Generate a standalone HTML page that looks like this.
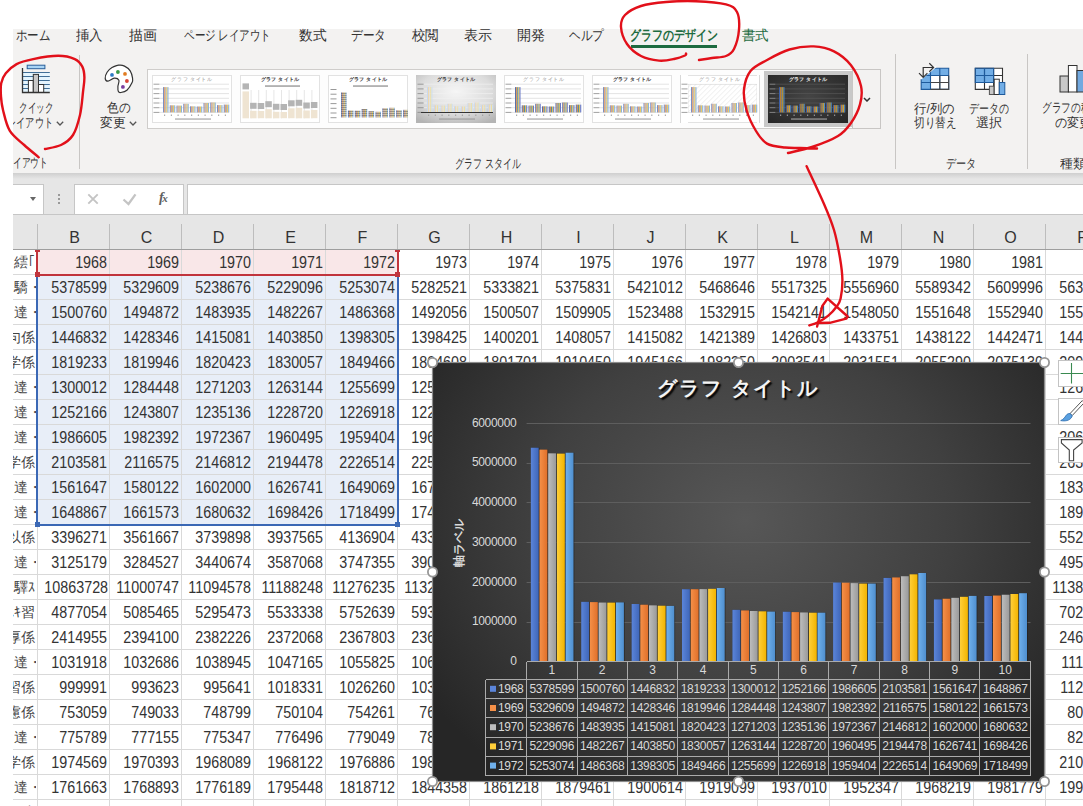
<!DOCTYPE html><html lang="ja"><head><meta charset="utf-8"><style>
*{box-sizing:border-box;margin:0;padding:0}
html,body{width:1083px;height:806px;overflow:hidden;background:#fff;font-family:"Liberation Sans", sans-serif;position:relative}
.a{position:absolute}
.tab{position:absolute;top:27px;font-size:13px;color:#444;white-space:nowrap;line-height:16px}
.rl{position:absolute;font-size:12px;color:#444;white-space:nowrap;line-height:15px;text-align:center}
.sep{position:absolute;width:1px;background:#c8c6c4}
.cell{position:absolute;height:25px;line-height:24px;font-size:16px;transform:scaleX(0.895);transform-origin:100% 50%;color:#333;text-align:right;white-space:nowrap;overflow:visible}
.hdr{position:absolute;top:221px;height:34px;line-height:34px;font-size:16px;color:#333;text-align:center}

</style></head><body>
<div class="a" style="left:13px;top:29px;width:1070px;height:144px;background:#f3f2f1"></div>
<span class="fit a" id="f1" style="left:16.02px;top:28.0px;font-size:14px;line-height:14px;color:#333;font-weight:500;white-space:nowrap;transform-origin:0 50%;transform:scaleX(0.8205);">ホーム</span>
<span class="fit a" id="f2" style="left:76.02px;top:28.0px;font-size:14px;line-height:14px;color:#333;font-weight:500;white-space:nowrap;transform-origin:0 50%;transform:scaleX(0.9629);">挿入</span>
<span class="fit a" id="f3" style="left:129.02px;top:28.0px;font-size:14px;line-height:14px;color:#333;font-weight:500;white-space:nowrap;transform-origin:0 50%;transform:scaleX(0.9986);">描画</span>
<span class="fit a" id="f4" style="left:184.02px;top:28.0px;font-size:14px;line-height:14px;color:#333;font-weight:500;white-space:nowrap;transform-origin:0 50%;transform:scaleX(0.7504);">ページ レイアウト</span>
<span class="fit a" id="f5" style="left:299.02px;top:28.0px;font-size:14px;line-height:14px;color:#333;font-weight:500;white-space:nowrap;transform-origin:0 50%;transform:scaleX(0.9807);">数式</span>
<span class="fit a" id="f6" style="left:351.02px;top:28.0px;font-size:14px;line-height:14px;color:#333;font-weight:500;white-space:nowrap;transform-origin:0 50%;transform:scaleX(0.8324);">データ</span>
<span class="fit a" id="f7" style="left:412.02px;top:28.0px;font-size:14px;line-height:14px;color:#333;font-weight:500;white-space:nowrap;transform-origin:0 50%;transform:scaleX(0.9629);">校閲</span>
<span class="fit a" id="f8" style="left:464.02px;top:28.0px;font-size:14px;line-height:14px;color:#333;font-weight:500;white-space:nowrap;transform-origin:0 50%;transform:scaleX(0.9986);">表示</span>
<span class="fit a" id="f9" style="left:517.02px;top:28.0px;font-size:14px;line-height:14px;color:#333;font-weight:500;white-space:nowrap;transform-origin:0 50%;transform:scaleX(0.9986);">開発</span>
<span class="fit a" id="f10" style="left:569.02px;top:28.0px;font-size:14px;line-height:14px;color:#333;font-weight:500;white-space:nowrap;transform-origin:0 50%;transform:scaleX(0.8324);">ヘルプ</span>
<span class="fit a" id="f11" style="left:630.02px;top:28.0px;font-size:14px;line-height:14px;color:#1d6b40;font-weight:bold;white-space:nowrap;transform-origin:0 50%;transform:scaleX(0.7809);">グラフのデザイン</span>
<div class="a" style="left:631px;top:45px;width:86px;height:3px;background:#1d6b40"></div>
<span class="fit a" id="f12" style="left:742.02px;top:28.0px;font-size:14px;line-height:14px;color:#1d6b40;font-weight:500;white-space:nowrap;transform-origin:0 50%;transform:scaleX(0.9629);">書式</span>
<svg class="a" style="left:21px;top:64px" width="30" height="30" viewBox="0 0 30 30">
<rect x="6.2" y="1.2" width="17.7" height="3.5" fill="#a8d4f5" stroke="#2a5f9a" stroke-width="1"/>
<rect x="1.5" y="8.5" width="27.3" height="20" fill="#e4f4fd"/>
<g stroke="#2c5f8a" stroke-width="0.9"><path d="M1.5 8.5 H28.8 M1.5 12.5 H28.8 M1.5 16.5 H28.8 M1.5 20.5 H28.8 M1.5 24.5 H28.8"/></g>
<rect x="7.4" y="16.5" width="4.9" height="12" fill="#fff" stroke="#333" stroke-width="1"/>
<rect x="12.3" y="10.4" width="5.2" height="18.1" fill="#c8c8c8" stroke="#333" stroke-width="1"/>
<rect x="17.5" y="20.5" width="5.2" height="8" fill="#fff" stroke="#333" stroke-width="1"/>
<path d="M1.5 4 V28.5 H28.8" fill="none" stroke="#333" stroke-width="1.3"/>
</svg>
<span class="fit a" id="f13" style="left:18.825px;top:102.3px;font-size:12.5px;line-height:12.5px;color:#333;font-weight:500;white-space:nowrap;transform-origin:0 50%;transform:scaleX(0.6625);">クイック</span>
<span class="fit a" id="f14" style="left:7.125px;top:117.2px;font-size:12.5px;line-height:12.5px;color:#333;font-weight:500;white-space:nowrap;transform-origin:0 50%;transform:scaleX(0.7100);">レイアウト</span>
<div class="a" style="left:0;top:110px;width:13px;height:30px;background:#fff"></div>
<svg class="a" style="left:56px;top:121px" width="8" height="5" viewBox="0 0 8 5"><path d="M0.8 0.8 L4 4 L7.2 0.8" fill="none" stroke="#555" stroke-width="1.3"/></svg>
<span class="fit a" id="f15" style="left:4.125px;top:157.4px;font-size:12.5px;line-height:12.5px;color:#333;font-weight:500;white-space:nowrap;transform-origin:0 50%;transform:scaleX(0.6762);">レイアウト</span>
<div class="a" style="left:0;top:150px;width:13px;height:30px;background:#fff"></div>
<div class="sep" style="left:79px;top:55px;height:114px"></div>
<svg class="a" style="left:104px;top:64px" width="30" height="30" viewBox="0 0 30 30">
<path d="M14.90 1.20 C15.72 0.42 9.97 2.42 8.00 3.60 C6.03 4.78 4.23 6.50 3.10 8.30 C1.97 10.10 1.05 12.92 1.20 14.40 C1.35 15.88 2.50 17.23 4.00 17.20 C5.50 17.17 8.38 14.35 10.20 14.20 C12.02 14.05 14.28 14.93 14.90 16.30 C15.52 17.67 13.98 20.52 13.90 22.40 C13.82 24.28 13.92 26.58 14.40 27.60 C14.88 28.62 15.38 28.73 16.80 28.50 C18.22 28.27 21.02 27.85 22.90 26.20 C24.78 24.55 27.17 20.65 28.10 18.60 C29.03 16.55 28.82 15.87 28.50 13.90 C28.18 11.93 27.53 8.77 26.20 6.80 C24.87 4.83 22.38 3.03 20.50 2.10 C18.62 1.17 16.98 0.95 14.90 1.20 Z" fill="#fff" stroke="#333" stroke-width="1.2"/>
<circle cx="8" cy="10.9" r="1.9" fill="#2e7bc4"/>
<circle cx="13.9" cy="8" r="1.9" fill="#3a9a4a"/>
<circle cx="21" cy="9.9" r="1.9" fill="#e07b21"/>
<circle cx="22.9" cy="17" r="1.9" fill="#d9463a"/>
<circle cx="18.9" cy="22.9" r="1.9" fill="#7a3fa0"/>
</svg>
<span class="fit a" id="f16" style="left:107.425px;top:102.3px;font-size:12.5px;line-height:12.5px;color:#333;font-weight:500;white-space:nowrap;transform-origin:0 50%;transform:scaleX(0.8981);">色の</span>
<span class="fit a" id="f17" style="left:100.025px;top:117.2px;font-size:12.5px;line-height:12.5px;color:#333;font-weight:500;white-space:nowrap;transform-origin:0 50%;transform:scaleX(0.9827);">変更</span>
<svg class="a" style="left:129px;top:121px" width="8" height="5" viewBox="0 0 8 5"><path d="M0.8 0.8 L4 4 L7.2 0.8" fill="none" stroke="#555" stroke-width="1.3"/></svg>
<div class="a" style="left:147px;top:69px;width:734px;height:60px;border:1px solid #cfcdcb;background:#fdfdfd"></div>
<div class="a" style="left:852px;top:69px;width:29px;height:60px;border:1px solid #c8c6c4;background:#f3f2f1"></div>
<svg class="a" style="left:863px;top:97px" width="8" height="5" viewBox="0 0 8 5"><path d="M1 1 L4 4 L7 1" fill="none" stroke="#333" stroke-width="1.5"/></svg>
<svg class="a" style="left:152px;top:75px" width="80" height="48" viewBox="0 0 80 48"><rect x="0.5" y="0.5" width="79" height="47" fill="#fff" stroke="#e2e2e2" stroke-width="1"/><text x="40" y="6" font-size="5" text-anchor="middle" fill="#8a8a8a" letter-spacing="0.6">グラフ タイトル</text><line x1="8" y1="9.2" x2="77" y2="9.2" stroke="#d9d9d9" stroke-width="0.7"/><rect x="1.5" y="8.7" width="6" height="1" fill="#8a8a8a" opacity="0.8"/><line x1="8" y1="13.9" x2="77" y2="13.9" stroke="#d9d9d9" stroke-width="0.7"/><rect x="1.5" y="13.4" width="6" height="1" fill="#8a8a8a" opacity="0.8"/><line x1="8" y1="18.6" x2="77" y2="18.6" stroke="#d9d9d9" stroke-width="0.7"/><rect x="1.5" y="18.1" width="6" height="1" fill="#8a8a8a" opacity="0.8"/><line x1="8" y1="23.3" x2="77" y2="23.3" stroke="#d9d9d9" stroke-width="0.7"/><rect x="1.5" y="22.8" width="6" height="1" fill="#8a8a8a" opacity="0.8"/><line x1="8" y1="28.0" x2="77" y2="28.0" stroke="#d9d9d9" stroke-width="0.7"/><rect x="1.5" y="27.5" width="6" height="1" fill="#8a8a8a" opacity="0.8"/><line x1="8" y1="32.7" x2="77" y2="32.7" stroke="#d9d9d9" stroke-width="0.7"/><rect x="1.5" y="32.2" width="6" height="1" fill="#8a8a8a" opacity="0.8"/><line x1="8" y1="37.4" x2="77" y2="37.4" stroke="#d9d9d9" stroke-width="0.7"/><rect x="1.5" y="36.9" width="6" height="1" fill="#8a8a8a" opacity="0.8"/><rect x="11.00" y="12.1" width="1.1" height="25.3" fill="#7b8fc4"/><rect x="12.10" y="12.1" width="1.1" height="25.3" fill="#e0a070"/><rect x="13.20" y="12.1" width="1.1" height="25.3" fill="#b0b0b0"/><rect x="14.30" y="12.1" width="1.1" height="25.3" fill="#e8c860"/><rect x="15.40" y="12.1" width="1.1" height="25.3" fill="#8cb4dc"/><rect x="17.75" y="30.3" width="1.1" height="7.0" fill="#7b8fc4"/><rect x="18.85" y="30.3" width="1.1" height="7.0" fill="#e0a070"/><rect x="19.95" y="30.3" width="1.1" height="7.0" fill="#b0b0b0"/><rect x="21.05" y="30.3" width="1.1" height="7.0" fill="#e8c860"/><rect x="22.15" y="30.3" width="1.1" height="7.0" fill="#8cb4dc"/><rect x="24.50" y="30.6" width="1.1" height="6.8" fill="#7b8fc4"/><rect x="25.60" y="30.6" width="1.1" height="6.8" fill="#e0a070"/><rect x="26.70" y="30.6" width="1.1" height="6.8" fill="#b0b0b0"/><rect x="27.80" y="30.6" width="1.1" height="6.8" fill="#e8c860"/><rect x="28.90" y="30.6" width="1.1" height="6.8" fill="#8cb4dc"/><rect x="31.25" y="28.8" width="1.1" height="8.6" fill="#7b8fc4"/><rect x="32.35" y="28.8" width="1.1" height="8.6" fill="#e0a070"/><rect x="33.45" y="28.8" width="1.1" height="8.6" fill="#b0b0b0"/><rect x="34.55" y="28.8" width="1.1" height="8.6" fill="#e8c860"/><rect x="35.65" y="28.8" width="1.1" height="8.6" fill="#8cb4dc"/><rect x="38.00" y="31.3" width="1.1" height="6.1" fill="#7b8fc4"/><rect x="39.10" y="31.3" width="1.1" height="6.1" fill="#e0a070"/><rect x="40.20" y="31.3" width="1.1" height="6.1" fill="#b0b0b0"/><rect x="41.30" y="31.3" width="1.1" height="6.1" fill="#e8c860"/><rect x="42.40" y="31.3" width="1.1" height="6.1" fill="#8cb4dc"/><rect x="44.75" y="31.5" width="1.1" height="5.9" fill="#7b8fc4"/><rect x="45.85" y="31.5" width="1.1" height="5.9" fill="#e0a070"/><rect x="46.95" y="31.5" width="1.1" height="5.9" fill="#b0b0b0"/><rect x="48.05" y="31.5" width="1.1" height="5.9" fill="#e8c860"/><rect x="49.15" y="31.5" width="1.1" height="5.9" fill="#8cb4dc"/><rect x="51.50" y="28.0" width="1.1" height="9.4" fill="#7b8fc4"/><rect x="52.60" y="28.0" width="1.1" height="9.4" fill="#e0a070"/><rect x="53.70" y="28.0" width="1.1" height="9.4" fill="#b0b0b0"/><rect x="54.80" y="28.0" width="1.1" height="9.4" fill="#e8c860"/><rect x="55.90" y="28.0" width="1.1" height="9.4" fill="#8cb4dc"/><rect x="58.25" y="27.5" width="1.1" height="9.9" fill="#7b8fc4"/><rect x="59.35" y="27.5" width="1.1" height="9.9" fill="#e0a070"/><rect x="60.45" y="27.5" width="1.1" height="9.9" fill="#b0b0b0"/><rect x="61.55" y="27.5" width="1.1" height="9.9" fill="#e8c860"/><rect x="62.65" y="27.5" width="1.1" height="9.9" fill="#8cb4dc"/><rect x="65.00" y="30.1" width="1.1" height="7.3" fill="#7b8fc4"/><rect x="66.10" y="30.1" width="1.1" height="7.3" fill="#e0a070"/><rect x="67.20" y="30.1" width="1.1" height="7.3" fill="#b0b0b0"/><rect x="68.30" y="30.1" width="1.1" height="7.3" fill="#e8c860"/><rect x="69.40" y="30.1" width="1.1" height="7.3" fill="#8cb4dc"/><rect x="71.75" y="29.6" width="1.1" height="7.8" fill="#7b8fc4"/><rect x="72.85" y="29.6" width="1.1" height="7.8" fill="#e0a070"/><rect x="73.95" y="29.6" width="1.1" height="7.8" fill="#b0b0b0"/><rect x="75.05" y="29.6" width="1.1" height="7.8" fill="#e8c860"/><rect x="76.15" y="29.6" width="1.1" height="7.8" fill="#8cb4dc"/><rect x="12.0" y="39.6" width="1.2" height="1.2" fill="#999"/><rect x="18.8" y="39.6" width="1.2" height="1.2" fill="#999"/><rect x="25.5" y="39.6" width="1.2" height="1.2" fill="#999"/><rect x="32.2" y="39.6" width="1.2" height="1.2" fill="#999"/><rect x="39.0" y="39.6" width="1.2" height="1.2" fill="#999"/><rect x="45.8" y="39.6" width="1.2" height="1.2" fill="#999"/><rect x="52.5" y="39.6" width="1.2" height="1.2" fill="#999"/><rect x="59.2" y="39.6" width="1.2" height="1.2" fill="#999"/><rect x="66.0" y="39.6" width="1.2" height="1.2" fill="#999"/><rect x="72.8" y="39.6" width="1.2" height="1.2" fill="#999"/><rect x="23" y="43.4" width="36" height="1.3" fill="#999" opacity="0.8"/></svg>
<svg class="a" style="left:240px;top:75px" width="80" height="48" viewBox="0 0 80 48"><rect x="0.5" y="0.5" width="79" height="47" fill="#fff" stroke="#e2e2e2" stroke-width="1"/><text x="40" y="6.3" font-size="5.2" font-weight="bold" text-anchor="middle" fill="#333" letter-spacing="0.3">グラフ タイトル</text><rect x="25" y="10.3" width="35" height="1.5" fill="#777" opacity="0.7"/><line x1="11.1" y1="15" x2="11.1" y2="43.3" stroke="#ccc" stroke-width="0.5"/><rect x="2.5" y="16.4" width="6.5" height="26.9" fill="#efe4d2"/><rect x="2.5" y="8.4" width="6.5" height="6" fill="#b4b4b4"/><line x1="18.7" y1="15" x2="18.7" y2="43.3" stroke="#ccc" stroke-width="0.5"/><rect x="10.1" y="35.8" width="6.5" height="7.5" fill="#efe4d2"/><rect x="10.1" y="27.8" width="6.5" height="6" fill="#b4b4b4"/><line x1="26.3" y1="15" x2="26.3" y2="43.3" stroke="#ccc" stroke-width="0.5"/><rect x="17.7" y="36.0" width="6.5" height="7.2" fill="#efe4d2"/><rect x="17.7" y="28.0" width="6.5" height="6" fill="#b4b4b4"/><line x1="33.9" y1="15" x2="33.9" y2="43.3" stroke="#ccc" stroke-width="0.5"/><rect x="25.3" y="34.2" width="6.5" height="9.1" fill="#efe4d2"/><rect x="25.3" y="26.2" width="6.5" height="6" fill="#b4b4b4"/><line x1="41.5" y1="15" x2="41.5" y2="43.3" stroke="#ccc" stroke-width="0.5"/><rect x="32.9" y="36.8" width="6.5" height="6.5" fill="#efe4d2"/><rect x="32.9" y="28.8" width="6.5" height="6" fill="#b4b4b4"/><line x1="49.1" y1="15" x2="49.1" y2="43.3" stroke="#ccc" stroke-width="0.5"/><rect x="40.5" y="37.0" width="6.5" height="6.2" fill="#efe4d2"/><rect x="40.5" y="29.0" width="6.5" height="6" fill="#b4b4b4"/><line x1="56.7" y1="15" x2="56.7" y2="43.3" stroke="#ccc" stroke-width="0.5"/><rect x="48.1" y="33.3" width="6.5" height="9.9" fill="#efe4d2"/><rect x="48.1" y="25.3" width="6.5" height="6" fill="#b4b4b4"/><line x1="64.3" y1="15" x2="64.3" y2="43.3" stroke="#ccc" stroke-width="0.5"/><rect x="55.7" y="32.8" width="6.5" height="10.5" fill="#efe4d2"/><rect x="55.7" y="24.8" width="6.5" height="6" fill="#b4b4b4"/><line x1="71.9" y1="15" x2="71.9" y2="43.3" stroke="#ccc" stroke-width="0.5"/><rect x="63.3" y="35.5" width="6.5" height="7.8" fill="#efe4d2"/><rect x="63.3" y="27.5" width="6.5" height="6" fill="#b4b4b4"/><rect x="70.9" y="35.0" width="6.5" height="8.2" fill="#efe4d2"/><rect x="70.9" y="27.0" width="6.5" height="6" fill="#b4b4b4"/></svg>
<svg class="a" style="left:328px;top:75px" width="80" height="48" viewBox="0 0 80 48"><rect x="0.5" y="0.5" width="79" height="47" fill="#fff" stroke="#e2e2e2" stroke-width="1"/><text x="40" y="6.3" font-size="5.2" font-weight="bold" text-anchor="middle" fill="#333" letter-spacing="0.3">グラフ タイトル</text><rect x="25" y="10.3" width="35" height="1.5" fill="#777" opacity="0.7"/><rect x="2.5" y="14.0" width="6" height="1" fill="#999"/><rect x="2.5" y="18.7" width="6" height="1" fill="#999"/><rect x="2.5" y="23.4" width="6" height="1" fill="#999"/><rect x="2.5" y="28.1" width="6" height="1" fill="#999"/><rect x="2.5" y="32.8" width="6" height="1" fill="#999"/><rect x="2.5" y="37.5" width="6" height="1" fill="#999"/><rect x="2.5" y="42.2" width="6" height="1" fill="#999"/><rect x="13.00" y="17.4" width="1.1" height="25.1" fill="#7b8fc4"/><rect x="14.10" y="17.4" width="1.1" height="25.1" fill="#e0a070"/><rect x="15.20" y="17.4" width="1.1" height="25.1" fill="#b0b0b0"/><rect x="16.30" y="17.4" width="1.1" height="25.1" fill="#e8c860"/><rect x="17.40" y="17.4" width="1.1" height="25.1" fill="#8cb4dc"/><line x1="13.0" y1="40.5" x2="18.5" y2="40.5" stroke="#555" stroke-width="0.45"/><line x1="13.0" y1="38.5" x2="18.5" y2="38.5" stroke="#555" stroke-width="0.45"/><line x1="13.0" y1="36.5" x2="18.5" y2="36.5" stroke="#555" stroke-width="0.45"/><line x1="13.0" y1="34.5" x2="18.5" y2="34.5" stroke="#555" stroke-width="0.45"/><line x1="13.0" y1="32.5" x2="18.5" y2="32.5" stroke="#555" stroke-width="0.45"/><line x1="13.0" y1="30.5" x2="18.5" y2="30.5" stroke="#555" stroke-width="0.45"/><line x1="13.0" y1="28.5" x2="18.5" y2="28.5" stroke="#555" stroke-width="0.45"/><line x1="13.0" y1="26.5" x2="18.5" y2="26.5" stroke="#555" stroke-width="0.45"/><line x1="13.0" y1="24.5" x2="18.5" y2="24.5" stroke="#555" stroke-width="0.45"/><line x1="13.0" y1="22.5" x2="18.5" y2="22.5" stroke="#555" stroke-width="0.45"/><line x1="13.0" y1="20.5" x2="18.5" y2="20.5" stroke="#555" stroke-width="0.45"/><line x1="13.0" y1="18.5" x2="18.5" y2="18.5" stroke="#555" stroke-width="0.45"/><rect x="19.90" y="35.5" width="1.1" height="7.0" fill="#7b8fc4"/><rect x="21.00" y="35.5" width="1.1" height="7.0" fill="#e0a070"/><rect x="22.10" y="35.5" width="1.1" height="7.0" fill="#b0b0b0"/><rect x="23.20" y="35.5" width="1.1" height="7.0" fill="#e8c860"/><rect x="24.30" y="35.5" width="1.1" height="7.0" fill="#8cb4dc"/><line x1="19.9" y1="40.5" x2="25.4" y2="40.5" stroke="#555" stroke-width="0.45"/><line x1="19.9" y1="38.5" x2="25.4" y2="38.5" stroke="#555" stroke-width="0.45"/><line x1="19.9" y1="36.5" x2="25.4" y2="36.5" stroke="#555" stroke-width="0.45"/><rect x="26.80" y="35.7" width="1.1" height="6.8" fill="#7b8fc4"/><rect x="27.90" y="35.7" width="1.1" height="6.8" fill="#e0a070"/><rect x="29.00" y="35.7" width="1.1" height="6.8" fill="#b0b0b0"/><rect x="30.10" y="35.7" width="1.1" height="6.8" fill="#e8c860"/><rect x="31.20" y="35.7" width="1.1" height="6.8" fill="#8cb4dc"/><line x1="26.8" y1="40.5" x2="32.3" y2="40.5" stroke="#555" stroke-width="0.45"/><line x1="26.8" y1="38.5" x2="32.3" y2="38.5" stroke="#555" stroke-width="0.45"/><line x1="26.8" y1="36.5" x2="32.3" y2="36.5" stroke="#555" stroke-width="0.45"/><rect x="33.70" y="34.0" width="1.1" height="8.5" fill="#7b8fc4"/><rect x="34.80" y="34.0" width="1.1" height="8.5" fill="#e0a070"/><rect x="35.90" y="34.0" width="1.1" height="8.5" fill="#b0b0b0"/><rect x="37.00" y="34.0" width="1.1" height="8.5" fill="#e8c860"/><rect x="38.10" y="34.0" width="1.1" height="8.5" fill="#8cb4dc"/><line x1="33.7" y1="40.5" x2="39.2" y2="40.5" stroke="#555" stroke-width="0.45"/><line x1="33.7" y1="38.5" x2="39.2" y2="38.5" stroke="#555" stroke-width="0.45"/><line x1="33.7" y1="36.5" x2="39.2" y2="36.5" stroke="#555" stroke-width="0.45"/><line x1="33.7" y1="34.5" x2="39.2" y2="34.5" stroke="#555" stroke-width="0.45"/><rect x="40.60" y="36.4" width="1.1" height="6.1" fill="#7b8fc4"/><rect x="41.70" y="36.4" width="1.1" height="6.1" fill="#e0a070"/><rect x="42.80" y="36.4" width="1.1" height="6.1" fill="#b0b0b0"/><rect x="43.90" y="36.4" width="1.1" height="6.1" fill="#e8c860"/><rect x="45.00" y="36.4" width="1.1" height="6.1" fill="#8cb4dc"/><line x1="40.6" y1="40.5" x2="46.1" y2="40.5" stroke="#555" stroke-width="0.45"/><line x1="40.6" y1="38.5" x2="46.1" y2="38.5" stroke="#555" stroke-width="0.45"/><line x1="40.6" y1="36.5" x2="46.1" y2="36.5" stroke="#555" stroke-width="0.45"/><rect x="47.50" y="36.7" width="1.1" height="5.8" fill="#7b8fc4"/><rect x="48.60" y="36.7" width="1.1" height="5.8" fill="#e0a070"/><rect x="49.70" y="36.7" width="1.1" height="5.8" fill="#b0b0b0"/><rect x="50.80" y="36.7" width="1.1" height="5.8" fill="#e8c860"/><rect x="51.90" y="36.7" width="1.1" height="5.8" fill="#8cb4dc"/><line x1="47.5" y1="40.5" x2="53.0" y2="40.5" stroke="#555" stroke-width="0.45"/><line x1="47.5" y1="38.5" x2="53.0" y2="38.5" stroke="#555" stroke-width="0.45"/><rect x="54.40" y="33.2" width="1.1" height="9.3" fill="#7b8fc4"/><rect x="55.50" y="33.2" width="1.1" height="9.3" fill="#e0a070"/><rect x="56.60" y="33.2" width="1.1" height="9.3" fill="#b0b0b0"/><rect x="57.70" y="33.2" width="1.1" height="9.3" fill="#e8c860"/><rect x="58.80" y="33.2" width="1.1" height="9.3" fill="#8cb4dc"/><line x1="54.4" y1="40.5" x2="59.9" y2="40.5" stroke="#555" stroke-width="0.45"/><line x1="54.4" y1="38.5" x2="59.9" y2="38.5" stroke="#555" stroke-width="0.45"/><line x1="54.4" y1="36.5" x2="59.9" y2="36.5" stroke="#555" stroke-width="0.45"/><line x1="54.4" y1="34.5" x2="59.9" y2="34.5" stroke="#555" stroke-width="0.45"/><rect x="61.30" y="32.7" width="1.1" height="9.8" fill="#7b8fc4"/><rect x="62.40" y="32.7" width="1.1" height="9.8" fill="#e0a070"/><rect x="63.50" y="32.7" width="1.1" height="9.8" fill="#b0b0b0"/><rect x="64.60" y="32.7" width="1.1" height="9.8" fill="#e8c860"/><rect x="65.70" y="32.7" width="1.1" height="9.8" fill="#8cb4dc"/><line x1="61.3" y1="40.5" x2="66.8" y2="40.5" stroke="#555" stroke-width="0.45"/><line x1="61.3" y1="38.5" x2="66.8" y2="38.5" stroke="#555" stroke-width="0.45"/><line x1="61.3" y1="36.5" x2="66.8" y2="36.5" stroke="#555" stroke-width="0.45"/><line x1="61.3" y1="34.5" x2="66.8" y2="34.5" stroke="#555" stroke-width="0.45"/><rect x="68.20" y="35.2" width="1.1" height="7.3" fill="#7b8fc4"/><rect x="69.30" y="35.2" width="1.1" height="7.3" fill="#e0a070"/><rect x="70.40" y="35.2" width="1.1" height="7.3" fill="#b0b0b0"/><rect x="71.50" y="35.2" width="1.1" height="7.3" fill="#e8c860"/><rect x="72.60" y="35.2" width="1.1" height="7.3" fill="#8cb4dc"/><line x1="68.2" y1="40.5" x2="73.7" y2="40.5" stroke="#555" stroke-width="0.45"/><line x1="68.2" y1="38.5" x2="73.7" y2="38.5" stroke="#555" stroke-width="0.45"/><line x1="68.2" y1="36.5" x2="73.7" y2="36.5" stroke="#555" stroke-width="0.45"/><rect x="75.10" y="34.8" width="1.1" height="7.7" fill="#7b8fc4"/><rect x="76.20" y="34.8" width="1.1" height="7.7" fill="#e0a070"/><rect x="77.30" y="34.8" width="1.1" height="7.7" fill="#b0b0b0"/><rect x="78.40" y="34.8" width="1.1" height="7.7" fill="#e8c860"/><rect x="79.50" y="34.8" width="1.1" height="7.7" fill="#8cb4dc"/><line x1="75.1" y1="40.5" x2="80.6" y2="40.5" stroke="#555" stroke-width="0.45"/><line x1="75.1" y1="38.5" x2="80.6" y2="38.5" stroke="#555" stroke-width="0.45"/><line x1="75.1" y1="36.5" x2="80.6" y2="36.5" stroke="#555" stroke-width="0.45"/></svg>
<svg class="a" style="left:416px;top:75px" width="80" height="48" viewBox="0 0 80 48"><defs><radialGradient id="tg3" cx="50%" cy="35%" r="75%"><stop offset="0" stop-color="#f6f6f6"/><stop offset="0.6" stop-color="#dcdcdc"/><stop offset="1" stop-color="#b4b4b4"/></radialGradient></defs><rect x="0" y="0" width="80" height="48" fill="url(#tg3)"/><text x="40" y="6.3" font-size="5.2" font-weight="bold" text-anchor="middle" fill="#333" letter-spacing="0.3">グラフ タイトル</text><line x1="8" y1="9.2" x2="77" y2="9.2" stroke="#f0f0f0" stroke-width="0.7"/><rect x="1.5" y="8.7" width="6" height="1" fill="#8a8a8a" opacity="0.8"/><line x1="8" y1="13.9" x2="77" y2="13.9" stroke="#f0f0f0" stroke-width="0.7"/><rect x="1.5" y="13.4" width="6" height="1" fill="#8a8a8a" opacity="0.8"/><line x1="8" y1="18.6" x2="77" y2="18.6" stroke="#f0f0f0" stroke-width="0.7"/><rect x="1.5" y="18.1" width="6" height="1" fill="#8a8a8a" opacity="0.8"/><line x1="8" y1="23.3" x2="77" y2="23.3" stroke="#f0f0f0" stroke-width="0.7"/><rect x="1.5" y="22.8" width="6" height="1" fill="#8a8a8a" opacity="0.8"/><line x1="8" y1="28.0" x2="77" y2="28.0" stroke="#f0f0f0" stroke-width="0.7"/><rect x="1.5" y="27.5" width="6" height="1" fill="#8a8a8a" opacity="0.8"/><line x1="8" y1="32.7" x2="77" y2="32.7" stroke="#f0f0f0" stroke-width="0.7"/><rect x="1.5" y="32.2" width="6" height="1" fill="#8a8a8a" opacity="0.8"/><line x1="8" y1="37.4" x2="77" y2="37.4" stroke="#f0f0f0" stroke-width="0.7"/><rect x="1.5" y="36.9" width="6" height="1" fill="#8a8a8a" opacity="0.8"/><rect x="11.00" y="12.1" width="1.1" height="25.3" fill="#c8d8f0"/><rect x="12.10" y="12.1" width="1.1" height="25.3" fill="#f0d8a8"/><rect x="13.20" y="12.1" width="1.1" height="25.3" fill="#e0e0e0"/><rect x="14.30" y="12.1" width="1.1" height="25.3" fill="#f0e0a0"/><rect x="15.40" y="12.1" width="1.1" height="25.3" fill="#d0e0f0"/><rect x="17.75" y="30.3" width="1.1" height="7.0" fill="#c8d8f0"/><rect x="18.85" y="30.3" width="1.1" height="7.0" fill="#f0d8a8"/><rect x="19.95" y="30.3" width="1.1" height="7.0" fill="#e0e0e0"/><rect x="21.05" y="30.3" width="1.1" height="7.0" fill="#f0e0a0"/><rect x="22.15" y="30.3" width="1.1" height="7.0" fill="#d0e0f0"/><rect x="24.50" y="30.6" width="1.1" height="6.8" fill="#c8d8f0"/><rect x="25.60" y="30.6" width="1.1" height="6.8" fill="#f0d8a8"/><rect x="26.70" y="30.6" width="1.1" height="6.8" fill="#e0e0e0"/><rect x="27.80" y="30.6" width="1.1" height="6.8" fill="#f0e0a0"/><rect x="28.90" y="30.6" width="1.1" height="6.8" fill="#d0e0f0"/><rect x="31.25" y="28.8" width="1.1" height="8.6" fill="#c8d8f0"/><rect x="32.35" y="28.8" width="1.1" height="8.6" fill="#f0d8a8"/><rect x="33.45" y="28.8" width="1.1" height="8.6" fill="#e0e0e0"/><rect x="34.55" y="28.8" width="1.1" height="8.6" fill="#f0e0a0"/><rect x="35.65" y="28.8" width="1.1" height="8.6" fill="#d0e0f0"/><rect x="38.00" y="31.3" width="1.1" height="6.1" fill="#c8d8f0"/><rect x="39.10" y="31.3" width="1.1" height="6.1" fill="#f0d8a8"/><rect x="40.20" y="31.3" width="1.1" height="6.1" fill="#e0e0e0"/><rect x="41.30" y="31.3" width="1.1" height="6.1" fill="#f0e0a0"/><rect x="42.40" y="31.3" width="1.1" height="6.1" fill="#d0e0f0"/><rect x="44.75" y="31.5" width="1.1" height="5.9" fill="#c8d8f0"/><rect x="45.85" y="31.5" width="1.1" height="5.9" fill="#f0d8a8"/><rect x="46.95" y="31.5" width="1.1" height="5.9" fill="#e0e0e0"/><rect x="48.05" y="31.5" width="1.1" height="5.9" fill="#f0e0a0"/><rect x="49.15" y="31.5" width="1.1" height="5.9" fill="#d0e0f0"/><rect x="51.50" y="28.0" width="1.1" height="9.4" fill="#c8d8f0"/><rect x="52.60" y="28.0" width="1.1" height="9.4" fill="#f0d8a8"/><rect x="53.70" y="28.0" width="1.1" height="9.4" fill="#e0e0e0"/><rect x="54.80" y="28.0" width="1.1" height="9.4" fill="#f0e0a0"/><rect x="55.90" y="28.0" width="1.1" height="9.4" fill="#d0e0f0"/><rect x="58.25" y="27.5" width="1.1" height="9.9" fill="#c8d8f0"/><rect x="59.35" y="27.5" width="1.1" height="9.9" fill="#f0d8a8"/><rect x="60.45" y="27.5" width="1.1" height="9.9" fill="#e0e0e0"/><rect x="61.55" y="27.5" width="1.1" height="9.9" fill="#f0e0a0"/><rect x="62.65" y="27.5" width="1.1" height="9.9" fill="#d0e0f0"/><rect x="65.00" y="30.1" width="1.1" height="7.3" fill="#c8d8f0"/><rect x="66.10" y="30.1" width="1.1" height="7.3" fill="#f0d8a8"/><rect x="67.20" y="30.1" width="1.1" height="7.3" fill="#e0e0e0"/><rect x="68.30" y="30.1" width="1.1" height="7.3" fill="#f0e0a0"/><rect x="69.40" y="30.1" width="1.1" height="7.3" fill="#d0e0f0"/><rect x="71.75" y="29.6" width="1.1" height="7.8" fill="#c8d8f0"/><rect x="72.85" y="29.6" width="1.1" height="7.8" fill="#f0d8a8"/><rect x="73.95" y="29.6" width="1.1" height="7.8" fill="#e0e0e0"/><rect x="75.05" y="29.6" width="1.1" height="7.8" fill="#f0e0a0"/><rect x="76.15" y="29.6" width="1.1" height="7.8" fill="#d0e0f0"/><rect x="5" y="37" width="72" height="1" fill="#333"/><rect x="12.0" y="39.6" width="1.2" height="1.2" fill="#999"/><rect x="18.8" y="39.6" width="1.2" height="1.2" fill="#999"/><rect x="25.5" y="39.6" width="1.2" height="1.2" fill="#999"/><rect x="32.2" y="39.6" width="1.2" height="1.2" fill="#999"/><rect x="39.0" y="39.6" width="1.2" height="1.2" fill="#999"/><rect x="45.8" y="39.6" width="1.2" height="1.2" fill="#999"/><rect x="52.5" y="39.6" width="1.2" height="1.2" fill="#999"/><rect x="59.2" y="39.6" width="1.2" height="1.2" fill="#999"/><rect x="66.0" y="39.6" width="1.2" height="1.2" fill="#999"/><rect x="72.8" y="39.6" width="1.2" height="1.2" fill="#999"/><rect x="23" y="43.4" width="36" height="1.3" fill="#999" opacity="0.8"/></svg>
<svg class="a" style="left:504px;top:75px" width="80" height="48" viewBox="0 0 80 48"><rect x="0.5" y="0.5" width="79" height="47" fill="#fff" stroke="#e2e2e2" stroke-width="1"/><text x="40" y="6" font-size="5" text-anchor="middle" fill="#8a8a8a" letter-spacing="0.6">グラフ タイトル</text><line x1="8" y1="9.2" x2="77" y2="9.2" stroke="#d9d9d9" stroke-width="0.7"/><rect x="1.5" y="8.7" width="6" height="1" fill="#8a8a8a" opacity="0.8"/><line x1="8" y1="13.9" x2="77" y2="13.9" stroke="#d9d9d9" stroke-width="0.7"/><rect x="1.5" y="13.4" width="6" height="1" fill="#8a8a8a" opacity="0.8"/><line x1="8" y1="18.6" x2="77" y2="18.6" stroke="#d9d9d9" stroke-width="0.7"/><rect x="1.5" y="18.1" width="6" height="1" fill="#8a8a8a" opacity="0.8"/><line x1="8" y1="23.3" x2="77" y2="23.3" stroke="#d9d9d9" stroke-width="0.7"/><rect x="1.5" y="22.8" width="6" height="1" fill="#8a8a8a" opacity="0.8"/><line x1="8" y1="28.0" x2="77" y2="28.0" stroke="#d9d9d9" stroke-width="0.7"/><rect x="1.5" y="27.5" width="6" height="1" fill="#8a8a8a" opacity="0.8"/><line x1="8" y1="32.7" x2="77" y2="32.7" stroke="#d9d9d9" stroke-width="0.7"/><rect x="1.5" y="32.2" width="6" height="1" fill="#8a8a8a" opacity="0.8"/><line x1="8" y1="37.4" x2="77" y2="37.4" stroke="#d9d9d9" stroke-width="0.7"/><rect x="1.5" y="36.9" width="6" height="1" fill="#8a8a8a" opacity="0.8"/><rect x="11.00" y="12.1" width="1.1" height="25.3" fill="#5a6fa8"/><rect x="12.10" y="12.1" width="1.1" height="25.3" fill="#d89050"/><rect x="13.20" y="12.1" width="1.1" height="25.3" fill="#5a8aa0"/><rect x="14.30" y="12.1" width="1.1" height="25.3" fill="#d8c050"/><rect x="15.40" y="12.1" width="1.1" height="25.3" fill="#6878c8"/><rect x="17.75" y="30.3" width="1.1" height="7.0" fill="#5a6fa8"/><rect x="18.85" y="30.3" width="1.1" height="7.0" fill="#d89050"/><rect x="19.95" y="30.3" width="1.1" height="7.0" fill="#5a8aa0"/><rect x="21.05" y="30.3" width="1.1" height="7.0" fill="#d8c050"/><rect x="22.15" y="30.3" width="1.1" height="7.0" fill="#6878c8"/><rect x="24.50" y="30.6" width="1.1" height="6.8" fill="#5a6fa8"/><rect x="25.60" y="30.6" width="1.1" height="6.8" fill="#d89050"/><rect x="26.70" y="30.6" width="1.1" height="6.8" fill="#5a8aa0"/><rect x="27.80" y="30.6" width="1.1" height="6.8" fill="#d8c050"/><rect x="28.90" y="30.6" width="1.1" height="6.8" fill="#6878c8"/><rect x="31.25" y="28.8" width="1.1" height="8.6" fill="#5a6fa8"/><rect x="32.35" y="28.8" width="1.1" height="8.6" fill="#d89050"/><rect x="33.45" y="28.8" width="1.1" height="8.6" fill="#5a8aa0"/><rect x="34.55" y="28.8" width="1.1" height="8.6" fill="#d8c050"/><rect x="35.65" y="28.8" width="1.1" height="8.6" fill="#6878c8"/><rect x="38.00" y="31.3" width="1.1" height="6.1" fill="#5a6fa8"/><rect x="39.10" y="31.3" width="1.1" height="6.1" fill="#d89050"/><rect x="40.20" y="31.3" width="1.1" height="6.1" fill="#5a8aa0"/><rect x="41.30" y="31.3" width="1.1" height="6.1" fill="#d8c050"/><rect x="42.40" y="31.3" width="1.1" height="6.1" fill="#6878c8"/><rect x="44.75" y="31.5" width="1.1" height="5.9" fill="#5a6fa8"/><rect x="45.85" y="31.5" width="1.1" height="5.9" fill="#d89050"/><rect x="46.95" y="31.5" width="1.1" height="5.9" fill="#5a8aa0"/><rect x="48.05" y="31.5" width="1.1" height="5.9" fill="#d8c050"/><rect x="49.15" y="31.5" width="1.1" height="5.9" fill="#6878c8"/><rect x="51.50" y="28.0" width="1.1" height="9.4" fill="#5a6fa8"/><rect x="52.60" y="28.0" width="1.1" height="9.4" fill="#d89050"/><rect x="53.70" y="28.0" width="1.1" height="9.4" fill="#5a8aa0"/><rect x="54.80" y="28.0" width="1.1" height="9.4" fill="#d8c050"/><rect x="55.90" y="28.0" width="1.1" height="9.4" fill="#6878c8"/><rect x="58.25" y="27.5" width="1.1" height="9.9" fill="#5a6fa8"/><rect x="59.35" y="27.5" width="1.1" height="9.9" fill="#d89050"/><rect x="60.45" y="27.5" width="1.1" height="9.9" fill="#5a8aa0"/><rect x="61.55" y="27.5" width="1.1" height="9.9" fill="#d8c050"/><rect x="62.65" y="27.5" width="1.1" height="9.9" fill="#6878c8"/><rect x="65.00" y="30.1" width="1.1" height="7.3" fill="#5a6fa8"/><rect x="66.10" y="30.1" width="1.1" height="7.3" fill="#d89050"/><rect x="67.20" y="30.1" width="1.1" height="7.3" fill="#5a8aa0"/><rect x="68.30" y="30.1" width="1.1" height="7.3" fill="#d8c050"/><rect x="69.40" y="30.1" width="1.1" height="7.3" fill="#6878c8"/><rect x="71.75" y="29.6" width="1.1" height="7.8" fill="#5a6fa8"/><rect x="72.85" y="29.6" width="1.1" height="7.8" fill="#d89050"/><rect x="73.95" y="29.6" width="1.1" height="7.8" fill="#5a8aa0"/><rect x="75.05" y="29.6" width="1.1" height="7.8" fill="#d8c050"/><rect x="76.15" y="29.6" width="1.1" height="7.8" fill="#6878c8"/><rect x="12.0" y="39.6" width="1.2" height="1.2" fill="#999"/><rect x="18.8" y="39.6" width="1.2" height="1.2" fill="#999"/><rect x="25.5" y="39.6" width="1.2" height="1.2" fill="#999"/><rect x="32.2" y="39.6" width="1.2" height="1.2" fill="#999"/><rect x="39.0" y="39.6" width="1.2" height="1.2" fill="#999"/><rect x="45.8" y="39.6" width="1.2" height="1.2" fill="#999"/><rect x="52.5" y="39.6" width="1.2" height="1.2" fill="#999"/><rect x="59.2" y="39.6" width="1.2" height="1.2" fill="#999"/><rect x="66.0" y="39.6" width="1.2" height="1.2" fill="#999"/><rect x="72.8" y="39.6" width="1.2" height="1.2" fill="#999"/><rect x="23" y="43.4" width="36" height="1.3" fill="#999" opacity="0.8"/></svg>
<svg class="a" style="left:592px;top:75px" width="80" height="48" viewBox="0 0 80 48"><rect x="0.5" y="0.5" width="79" height="47" fill="#fff" stroke="#e2e2e2" stroke-width="1"/><text x="40" y="6.3" font-size="5.2" font-weight="bold" text-anchor="middle" fill="#333" letter-spacing="0.3">グラフ タイトル</text><line x1="8" y1="9.2" x2="77" y2="9.2" stroke="#d9d9d9" stroke-width="0.7"/><rect x="1.5" y="8.7" width="6" height="1" fill="#8a8a8a" opacity="0.8"/><line x1="8" y1="13.9" x2="77" y2="13.9" stroke="#d9d9d9" stroke-width="0.7"/><rect x="1.5" y="13.4" width="6" height="1" fill="#8a8a8a" opacity="0.8"/><line x1="8" y1="18.6" x2="77" y2="18.6" stroke="#d9d9d9" stroke-width="0.7"/><rect x="1.5" y="18.1" width="6" height="1" fill="#8a8a8a" opacity="0.8"/><line x1="8" y1="23.3" x2="77" y2="23.3" stroke="#d9d9d9" stroke-width="0.7"/><rect x="1.5" y="22.8" width="6" height="1" fill="#8a8a8a" opacity="0.8"/><line x1="8" y1="28.0" x2="77" y2="28.0" stroke="#d9d9d9" stroke-width="0.7"/><rect x="1.5" y="27.5" width="6" height="1" fill="#8a8a8a" opacity="0.8"/><line x1="8" y1="32.7" x2="77" y2="32.7" stroke="#d9d9d9" stroke-width="0.7"/><rect x="1.5" y="32.2" width="6" height="1" fill="#8a8a8a" opacity="0.8"/><line x1="8" y1="37.4" x2="77" y2="37.4" stroke="#d9d9d9" stroke-width="0.7"/><rect x="1.5" y="36.9" width="6" height="1" fill="#8a8a8a" opacity="0.8"/><rect x="11.00" y="12.1" width="1.1" height="25.3" fill="#7b8fc4"/><rect x="12.10" y="12.1" width="1.1" height="25.3" fill="#e0a070"/><rect x="13.20" y="12.1" width="1.1" height="25.3" fill="#b0b0b0"/><rect x="14.30" y="12.1" width="1.1" height="25.3" fill="#e8c860"/><rect x="15.40" y="12.1" width="1.1" height="25.3" fill="#8cb4dc"/><rect x="17.75" y="30.3" width="1.1" height="7.0" fill="#7b8fc4"/><rect x="18.85" y="30.3" width="1.1" height="7.0" fill="#e0a070"/><rect x="19.95" y="30.3" width="1.1" height="7.0" fill="#b0b0b0"/><rect x="21.05" y="30.3" width="1.1" height="7.0" fill="#e8c860"/><rect x="22.15" y="30.3" width="1.1" height="7.0" fill="#8cb4dc"/><rect x="24.50" y="30.6" width="1.1" height="6.8" fill="#7b8fc4"/><rect x="25.60" y="30.6" width="1.1" height="6.8" fill="#e0a070"/><rect x="26.70" y="30.6" width="1.1" height="6.8" fill="#b0b0b0"/><rect x="27.80" y="30.6" width="1.1" height="6.8" fill="#e8c860"/><rect x="28.90" y="30.6" width="1.1" height="6.8" fill="#8cb4dc"/><rect x="31.25" y="28.8" width="1.1" height="8.6" fill="#7b8fc4"/><rect x="32.35" y="28.8" width="1.1" height="8.6" fill="#e0a070"/><rect x="33.45" y="28.8" width="1.1" height="8.6" fill="#b0b0b0"/><rect x="34.55" y="28.8" width="1.1" height="8.6" fill="#e8c860"/><rect x="35.65" y="28.8" width="1.1" height="8.6" fill="#8cb4dc"/><rect x="38.00" y="31.3" width="1.1" height="6.1" fill="#7b8fc4"/><rect x="39.10" y="31.3" width="1.1" height="6.1" fill="#e0a070"/><rect x="40.20" y="31.3" width="1.1" height="6.1" fill="#b0b0b0"/><rect x="41.30" y="31.3" width="1.1" height="6.1" fill="#e8c860"/><rect x="42.40" y="31.3" width="1.1" height="6.1" fill="#8cb4dc"/><rect x="44.75" y="31.5" width="1.1" height="5.9" fill="#7b8fc4"/><rect x="45.85" y="31.5" width="1.1" height="5.9" fill="#e0a070"/><rect x="46.95" y="31.5" width="1.1" height="5.9" fill="#b0b0b0"/><rect x="48.05" y="31.5" width="1.1" height="5.9" fill="#e8c860"/><rect x="49.15" y="31.5" width="1.1" height="5.9" fill="#8cb4dc"/><rect x="51.50" y="28.0" width="1.1" height="9.4" fill="#7b8fc4"/><rect x="52.60" y="28.0" width="1.1" height="9.4" fill="#e0a070"/><rect x="53.70" y="28.0" width="1.1" height="9.4" fill="#b0b0b0"/><rect x="54.80" y="28.0" width="1.1" height="9.4" fill="#e8c860"/><rect x="55.90" y="28.0" width="1.1" height="9.4" fill="#8cb4dc"/><rect x="58.25" y="27.5" width="1.1" height="9.9" fill="#7b8fc4"/><rect x="59.35" y="27.5" width="1.1" height="9.9" fill="#e0a070"/><rect x="60.45" y="27.5" width="1.1" height="9.9" fill="#b0b0b0"/><rect x="61.55" y="27.5" width="1.1" height="9.9" fill="#e8c860"/><rect x="62.65" y="27.5" width="1.1" height="9.9" fill="#8cb4dc"/><rect x="65.00" y="30.1" width="1.1" height="7.3" fill="#7b8fc4"/><rect x="66.10" y="30.1" width="1.1" height="7.3" fill="#e0a070"/><rect x="67.20" y="30.1" width="1.1" height="7.3" fill="#b0b0b0"/><rect x="68.30" y="30.1" width="1.1" height="7.3" fill="#e8c860"/><rect x="69.40" y="30.1" width="1.1" height="7.3" fill="#8cb4dc"/><rect x="71.75" y="29.6" width="1.1" height="7.8" fill="#7b8fc4"/><rect x="72.85" y="29.6" width="1.1" height="7.8" fill="#e0a070"/><rect x="73.95" y="29.6" width="1.1" height="7.8" fill="#b0b0b0"/><rect x="75.05" y="29.6" width="1.1" height="7.8" fill="#e8c860"/><rect x="76.15" y="29.6" width="1.1" height="7.8" fill="#8cb4dc"/><rect x="12.0" y="39.6" width="1.2" height="1.2" fill="#999"/><rect x="18.8" y="39.6" width="1.2" height="1.2" fill="#999"/><rect x="25.5" y="39.6" width="1.2" height="1.2" fill="#999"/><rect x="32.2" y="39.6" width="1.2" height="1.2" fill="#999"/><rect x="39.0" y="39.6" width="1.2" height="1.2" fill="#999"/><rect x="45.8" y="39.6" width="1.2" height="1.2" fill="#999"/><rect x="52.5" y="39.6" width="1.2" height="1.2" fill="#999"/><rect x="59.2" y="39.6" width="1.2" height="1.2" fill="#999"/><rect x="66.0" y="39.6" width="1.2" height="1.2" fill="#999"/><rect x="72.8" y="39.6" width="1.2" height="1.2" fill="#999"/><rect x="23" y="43.4" width="36" height="1.3" fill="#999" opacity="0.8"/></svg>
<svg class="a" style="left:680px;top:75px" width="80" height="48" viewBox="0 0 80 48"><rect x="0.5" y="0.5" width="79" height="47" fill="#fff" stroke="#e2e2e2" stroke-width="1"/><text x="40" y="6" font-size="5" text-anchor="middle" fill="#8a8a8a" letter-spacing="0.6">グラフ タイトル</text><rect x="8" y="9.2" width="69" height="28.2" fill="#fff" stroke="#ccc" stroke-width="0.5"/><line x1="-22" y1="37.4" x2="6.199999999999999" y2="9.2" stroke="#d0d0d0" stroke-width="0.4"/><line x1="-17" y1="37.4" x2="11.2" y2="9.2" stroke="#d0d0d0" stroke-width="0.4"/><line x1="-12" y1="37.4" x2="16.2" y2="9.2" stroke="#d0d0d0" stroke-width="0.4"/><line x1="-7" y1="37.4" x2="21.2" y2="9.2" stroke="#d0d0d0" stroke-width="0.4"/><line x1="-2" y1="37.4" x2="26.2" y2="9.2" stroke="#d0d0d0" stroke-width="0.4"/><line x1="3" y1="37.4" x2="31.2" y2="9.2" stroke="#d0d0d0" stroke-width="0.4"/><line x1="8" y1="37.4" x2="36.2" y2="9.2" stroke="#d0d0d0" stroke-width="0.4"/><line x1="13" y1="37.4" x2="41.2" y2="9.2" stroke="#d0d0d0" stroke-width="0.4"/><line x1="18" y1="37.4" x2="46.2" y2="9.2" stroke="#d0d0d0" stroke-width="0.4"/><line x1="23" y1="37.4" x2="51.2" y2="9.2" stroke="#d0d0d0" stroke-width="0.4"/><line x1="28" y1="37.4" x2="56.2" y2="9.2" stroke="#d0d0d0" stroke-width="0.4"/><line x1="33" y1="37.4" x2="61.2" y2="9.2" stroke="#d0d0d0" stroke-width="0.4"/><line x1="38" y1="37.4" x2="66.2" y2="9.2" stroke="#d0d0d0" stroke-width="0.4"/><line x1="43" y1="37.4" x2="71.2" y2="9.2" stroke="#d0d0d0" stroke-width="0.4"/><line x1="48" y1="37.4" x2="76.2" y2="9.2" stroke="#d0d0d0" stroke-width="0.4"/><line x1="53" y1="37.4" x2="81.2" y2="9.2" stroke="#d0d0d0" stroke-width="0.4"/><line x1="58" y1="37.4" x2="86.2" y2="9.2" stroke="#d0d0d0" stroke-width="0.4"/><line x1="63" y1="37.4" x2="91.2" y2="9.2" stroke="#d0d0d0" stroke-width="0.4"/><line x1="68" y1="37.4" x2="96.2" y2="9.2" stroke="#d0d0d0" stroke-width="0.4"/><line x1="73" y1="37.4" x2="101.2" y2="9.2" stroke="#d0d0d0" stroke-width="0.4"/><line x1="78" y1="37.4" x2="106.2" y2="9.2" stroke="#d0d0d0" stroke-width="0.4"/><line x1="83" y1="37.4" x2="111.2" y2="9.2" stroke="#d0d0d0" stroke-width="0.4"/><rect x="0" y="0" width="8" height="48" fill="#fff"/><rect x="77" y="0" width="3" height="48" fill="#fff"/><line x1="0.5" y1="0" x2="0.5" y2="48" stroke="#d8d8d8"/><line x1="79.5" y1="0" x2="79.5" y2="48" stroke="#d8d8d8"/><rect x="1.5" y="8.7" width="6" height="1" fill="#8a8a8a" opacity="0.8"/><rect x="1.5" y="13.4" width="6" height="1" fill="#8a8a8a" opacity="0.8"/><rect x="1.5" y="18.1" width="6" height="1" fill="#8a8a8a" opacity="0.8"/><rect x="1.5" y="22.8" width="6" height="1" fill="#8a8a8a" opacity="0.8"/><rect x="1.5" y="27.5" width="6" height="1" fill="#8a8a8a" opacity="0.8"/><rect x="1.5" y="32.2" width="6" height="1" fill="#8a8a8a" opacity="0.8"/><rect x="1.5" y="36.9" width="6" height="1" fill="#8a8a8a" opacity="0.8"/><rect x="11.00" y="12.1" width="1.1" height="25.3" fill="#7b8fc4"/><rect x="12.10" y="12.1" width="1.1" height="25.3" fill="#e0a070"/><rect x="13.20" y="12.1" width="1.1" height="25.3" fill="#b0b0b0"/><rect x="14.30" y="12.1" width="1.1" height="25.3" fill="#e8c860"/><rect x="15.40" y="12.1" width="1.1" height="25.3" fill="#8cb4dc"/><rect x="17.75" y="30.3" width="1.1" height="7.0" fill="#7b8fc4"/><rect x="18.85" y="30.3" width="1.1" height="7.0" fill="#e0a070"/><rect x="19.95" y="30.3" width="1.1" height="7.0" fill="#b0b0b0"/><rect x="21.05" y="30.3" width="1.1" height="7.0" fill="#e8c860"/><rect x="22.15" y="30.3" width="1.1" height="7.0" fill="#8cb4dc"/><rect x="24.50" y="30.6" width="1.1" height="6.8" fill="#7b8fc4"/><rect x="25.60" y="30.6" width="1.1" height="6.8" fill="#e0a070"/><rect x="26.70" y="30.6" width="1.1" height="6.8" fill="#b0b0b0"/><rect x="27.80" y="30.6" width="1.1" height="6.8" fill="#e8c860"/><rect x="28.90" y="30.6" width="1.1" height="6.8" fill="#8cb4dc"/><rect x="31.25" y="28.8" width="1.1" height="8.6" fill="#7b8fc4"/><rect x="32.35" y="28.8" width="1.1" height="8.6" fill="#e0a070"/><rect x="33.45" y="28.8" width="1.1" height="8.6" fill="#b0b0b0"/><rect x="34.55" y="28.8" width="1.1" height="8.6" fill="#e8c860"/><rect x="35.65" y="28.8" width="1.1" height="8.6" fill="#8cb4dc"/><rect x="38.00" y="31.3" width="1.1" height="6.1" fill="#7b8fc4"/><rect x="39.10" y="31.3" width="1.1" height="6.1" fill="#e0a070"/><rect x="40.20" y="31.3" width="1.1" height="6.1" fill="#b0b0b0"/><rect x="41.30" y="31.3" width="1.1" height="6.1" fill="#e8c860"/><rect x="42.40" y="31.3" width="1.1" height="6.1" fill="#8cb4dc"/><rect x="44.75" y="31.5" width="1.1" height="5.9" fill="#7b8fc4"/><rect x="45.85" y="31.5" width="1.1" height="5.9" fill="#e0a070"/><rect x="46.95" y="31.5" width="1.1" height="5.9" fill="#b0b0b0"/><rect x="48.05" y="31.5" width="1.1" height="5.9" fill="#e8c860"/><rect x="49.15" y="31.5" width="1.1" height="5.9" fill="#8cb4dc"/><rect x="51.50" y="28.0" width="1.1" height="9.4" fill="#7b8fc4"/><rect x="52.60" y="28.0" width="1.1" height="9.4" fill="#e0a070"/><rect x="53.70" y="28.0" width="1.1" height="9.4" fill="#b0b0b0"/><rect x="54.80" y="28.0" width="1.1" height="9.4" fill="#e8c860"/><rect x="55.90" y="28.0" width="1.1" height="9.4" fill="#8cb4dc"/><rect x="58.25" y="27.5" width="1.1" height="9.9" fill="#7b8fc4"/><rect x="59.35" y="27.5" width="1.1" height="9.9" fill="#e0a070"/><rect x="60.45" y="27.5" width="1.1" height="9.9" fill="#b0b0b0"/><rect x="61.55" y="27.5" width="1.1" height="9.9" fill="#e8c860"/><rect x="62.65" y="27.5" width="1.1" height="9.9" fill="#8cb4dc"/><rect x="65.00" y="30.1" width="1.1" height="7.3" fill="#7b8fc4"/><rect x="66.10" y="30.1" width="1.1" height="7.3" fill="#e0a070"/><rect x="67.20" y="30.1" width="1.1" height="7.3" fill="#b0b0b0"/><rect x="68.30" y="30.1" width="1.1" height="7.3" fill="#e8c860"/><rect x="69.40" y="30.1" width="1.1" height="7.3" fill="#8cb4dc"/><rect x="71.75" y="29.6" width="1.1" height="7.8" fill="#7b8fc4"/><rect x="72.85" y="29.6" width="1.1" height="7.8" fill="#e0a070"/><rect x="73.95" y="29.6" width="1.1" height="7.8" fill="#b0b0b0"/><rect x="75.05" y="29.6" width="1.1" height="7.8" fill="#e8c860"/><rect x="76.15" y="29.6" width="1.1" height="7.8" fill="#8cb4dc"/><rect x="12.0" y="39.6" width="1.2" height="1.2" fill="#999"/><rect x="18.8" y="39.6" width="1.2" height="1.2" fill="#999"/><rect x="25.5" y="39.6" width="1.2" height="1.2" fill="#999"/><rect x="32.2" y="39.6" width="1.2" height="1.2" fill="#999"/><rect x="39.0" y="39.6" width="1.2" height="1.2" fill="#999"/><rect x="45.8" y="39.6" width="1.2" height="1.2" fill="#999"/><rect x="52.5" y="39.6" width="1.2" height="1.2" fill="#999"/><rect x="59.2" y="39.6" width="1.2" height="1.2" fill="#999"/><rect x="66.0" y="39.6" width="1.2" height="1.2" fill="#999"/><rect x="72.8" y="39.6" width="1.2" height="1.2" fill="#999"/><rect x="23" y="43.4" width="36" height="1.3" fill="#999" opacity="0.8"/></svg>
<div class="a" style="left:764px;top:71px;width:88px;height:56px;background:#c8c8c8"></div>
<svg class="a" style="left:768px;top:75px" width="80" height="48" viewBox="0 0 80 48"><defs><radialGradient id="tg7" cx="50%" cy="45%" r="70%"><stop offset="0" stop-color="#454545"/><stop offset="1" stop-color="#282828"/></radialGradient></defs><rect x="0" y="0" width="80" height="48" fill="url(#tg7)"/><text x="40" y="6.3" font-size="5.2" font-weight="bold" text-anchor="middle" fill="#f0f0f0" letter-spacing="0.3">グラフ タイトル</text><line x1="8" y1="9.2" x2="77" y2="9.2" stroke="#585858" stroke-width="0.7"/><rect x="1.5" y="8.7" width="6" height="1" fill="#999" opacity="0.8"/><line x1="8" y1="13.9" x2="77" y2="13.9" stroke="#585858" stroke-width="0.7"/><rect x="1.5" y="13.4" width="6" height="1" fill="#999" opacity="0.8"/><line x1="8" y1="18.6" x2="77" y2="18.6" stroke="#585858" stroke-width="0.7"/><rect x="1.5" y="18.1" width="6" height="1" fill="#999" opacity="0.8"/><line x1="8" y1="23.3" x2="77" y2="23.3" stroke="#585858" stroke-width="0.7"/><rect x="1.5" y="22.8" width="6" height="1" fill="#999" opacity="0.8"/><line x1="8" y1="28.0" x2="77" y2="28.0" stroke="#585858" stroke-width="0.7"/><rect x="1.5" y="27.5" width="6" height="1" fill="#999" opacity="0.8"/><line x1="8" y1="32.7" x2="77" y2="32.7" stroke="#585858" stroke-width="0.7"/><rect x="1.5" y="32.2" width="6" height="1" fill="#999" opacity="0.8"/><line x1="8" y1="37.4" x2="77" y2="37.4" stroke="#585858" stroke-width="0.7"/><rect x="1.5" y="36.9" width="6" height="1" fill="#999" opacity="0.8"/><rect x="11.00" y="12.1" width="1.1" height="25.3" fill="#3c5fa8"/><rect x="12.10" y="12.1" width="1.1" height="25.3" fill="#c8862e"/><rect x="13.20" y="12.1" width="1.1" height="25.3" fill="#8a8a8a"/><rect x="14.30" y="12.1" width="1.1" height="25.3" fill="#d8a82a"/><rect x="15.40" y="12.1" width="1.1" height="25.3" fill="#4f86c0"/><rect x="17.75" y="30.3" width="1.1" height="7.0" fill="#3c5fa8"/><rect x="18.85" y="30.3" width="1.1" height="7.0" fill="#c8862e"/><rect x="19.95" y="30.3" width="1.1" height="7.0" fill="#8a8a8a"/><rect x="21.05" y="30.3" width="1.1" height="7.0" fill="#d8a82a"/><rect x="22.15" y="30.3" width="1.1" height="7.0" fill="#4f86c0"/><rect x="24.50" y="30.6" width="1.1" height="6.8" fill="#3c5fa8"/><rect x="25.60" y="30.6" width="1.1" height="6.8" fill="#c8862e"/><rect x="26.70" y="30.6" width="1.1" height="6.8" fill="#8a8a8a"/><rect x="27.80" y="30.6" width="1.1" height="6.8" fill="#d8a82a"/><rect x="28.90" y="30.6" width="1.1" height="6.8" fill="#4f86c0"/><rect x="31.25" y="28.8" width="1.1" height="8.6" fill="#3c5fa8"/><rect x="32.35" y="28.8" width="1.1" height="8.6" fill="#c8862e"/><rect x="33.45" y="28.8" width="1.1" height="8.6" fill="#8a8a8a"/><rect x="34.55" y="28.8" width="1.1" height="8.6" fill="#d8a82a"/><rect x="35.65" y="28.8" width="1.1" height="8.6" fill="#4f86c0"/><rect x="38.00" y="31.3" width="1.1" height="6.1" fill="#3c5fa8"/><rect x="39.10" y="31.3" width="1.1" height="6.1" fill="#c8862e"/><rect x="40.20" y="31.3" width="1.1" height="6.1" fill="#8a8a8a"/><rect x="41.30" y="31.3" width="1.1" height="6.1" fill="#d8a82a"/><rect x="42.40" y="31.3" width="1.1" height="6.1" fill="#4f86c0"/><rect x="44.75" y="31.5" width="1.1" height="5.9" fill="#3c5fa8"/><rect x="45.85" y="31.5" width="1.1" height="5.9" fill="#c8862e"/><rect x="46.95" y="31.5" width="1.1" height="5.9" fill="#8a8a8a"/><rect x="48.05" y="31.5" width="1.1" height="5.9" fill="#d8a82a"/><rect x="49.15" y="31.5" width="1.1" height="5.9" fill="#4f86c0"/><rect x="51.50" y="28.0" width="1.1" height="9.4" fill="#3c5fa8"/><rect x="52.60" y="28.0" width="1.1" height="9.4" fill="#c8862e"/><rect x="53.70" y="28.0" width="1.1" height="9.4" fill="#8a8a8a"/><rect x="54.80" y="28.0" width="1.1" height="9.4" fill="#d8a82a"/><rect x="55.90" y="28.0" width="1.1" height="9.4" fill="#4f86c0"/><rect x="58.25" y="27.5" width="1.1" height="9.9" fill="#3c5fa8"/><rect x="59.35" y="27.5" width="1.1" height="9.9" fill="#c8862e"/><rect x="60.45" y="27.5" width="1.1" height="9.9" fill="#8a8a8a"/><rect x="61.55" y="27.5" width="1.1" height="9.9" fill="#d8a82a"/><rect x="62.65" y="27.5" width="1.1" height="9.9" fill="#4f86c0"/><rect x="65.00" y="30.1" width="1.1" height="7.3" fill="#3c5fa8"/><rect x="66.10" y="30.1" width="1.1" height="7.3" fill="#c8862e"/><rect x="67.20" y="30.1" width="1.1" height="7.3" fill="#8a8a8a"/><rect x="68.30" y="30.1" width="1.1" height="7.3" fill="#d8a82a"/><rect x="69.40" y="30.1" width="1.1" height="7.3" fill="#4f86c0"/><rect x="71.75" y="29.6" width="1.1" height="7.8" fill="#3c5fa8"/><rect x="72.85" y="29.6" width="1.1" height="7.8" fill="#c8862e"/><rect x="73.95" y="29.6" width="1.1" height="7.8" fill="#8a8a8a"/><rect x="75.05" y="29.6" width="1.1" height="7.8" fill="#d8a82a"/><rect x="76.15" y="29.6" width="1.1" height="7.8" fill="#4f86c0"/><rect x="12.0" y="39.6" width="1.2" height="1.2" fill="#aaa"/><rect x="18.8" y="39.6" width="1.2" height="1.2" fill="#aaa"/><rect x="25.5" y="39.6" width="1.2" height="1.2" fill="#aaa"/><rect x="32.2" y="39.6" width="1.2" height="1.2" fill="#aaa"/><rect x="39.0" y="39.6" width="1.2" height="1.2" fill="#aaa"/><rect x="45.8" y="39.6" width="1.2" height="1.2" fill="#aaa"/><rect x="52.5" y="39.6" width="1.2" height="1.2" fill="#aaa"/><rect x="59.2" y="39.6" width="1.2" height="1.2" fill="#aaa"/><rect x="66.0" y="39.6" width="1.2" height="1.2" fill="#aaa"/><rect x="72.8" y="39.6" width="1.2" height="1.2" fill="#aaa"/><rect x="23" y="43.4" width="36" height="1.3" fill="#aaa" opacity="0.8"/></svg>
<span class="fit a" id="f18" style="left:454.825px;top:158.2px;font-size:12.5px;line-height:12.5px;color:#333;font-weight:500;white-space:nowrap;transform-origin:0 50%;transform:scaleX(0.6948);">グラフ スタイル</span>
<div class="sep" style="left:895px;top:54px;height:115px"></div>
<svg class="a" style="left:912px;top:58px" width="40" height="36" viewBox="0 0 40 36">
<rect x="9.2" y="10.2" width="27.5" height="21.2" fill="#fff"/>
<rect x="9.2" y="10.2" width="27.5" height="7.3" fill="#72aee6"/>
<rect x="9.2" y="17.5" width="9.3" height="13.9" fill="#72aee6"/>
<path d="M9.2 10.2 H36.7 V31.4 H9.2 Z M18.5 10.2 V31.4 M27.8 10.2 V31.4 M9.2 17.5 H36.7 M9.2 24.5 H36.7" fill="none" stroke="#1e5a9c" stroke-width="1.1"/>
<path d="M18.5 24.5 H36.7 M27.8 17.5 V31.4 M18.5 31.4 H36.7 V17.5" fill="none" stroke="#444" stroke-width="1.1"/>
<path d="M2 2 L32.2 2 L2 26.3 Z" fill="#f3f2f1"/>
<path d="M24.2 8.5 L8.8 20.9" stroke="#fff" stroke-width="1.3"/>
<path d="M21.6 9.5 H11.2 V19.4 M17.3 5.3 L21.6 9.5 L17.3 13.7 M7 15.2 L11.2 19.4 L15.4 15.2" fill="none" stroke="#333" stroke-width="1.2"/>
</svg>
<span class="fit a" id="f19" style="left:914.025px;top:102.8px;font-size:12.5px;line-height:12.5px;color:#333;font-weight:500;white-space:nowrap;transform-origin:0 50%;transform:scaleX(0.9545);">行/列の</span>
<span class="fit a" id="f20" style="left:913.525px;top:117.0px;font-size:12.5px;line-height:12.5px;color:#333;font-weight:500;white-space:nowrap;transform-origin:0 50%;transform:scaleX(0.8125);">切り替え</span>
<svg class="a" style="left:974px;top:66px" width="32" height="30" viewBox="0 0 32 30">
<rect x="1.3" y="2.2" width="27.2" height="21.2" fill="#fff"/>
<rect x="1.3" y="2.2" width="18.3" height="14.3" fill="#72aee6"/>
<path d="M1.3 2.2 H28.5 V23.4 H1.3 Z M10.5 2.2 V23.4 M19.6 2.2 V23.4 M1.3 9.5 H28.5 M1.3 16.5 H28.5" fill="none" stroke="#333" stroke-width="1.1"/>
<path d="M1.3 2.2 H19.6 V16.5 H1.3 Z M10.5 2.2 V16.5 M1.3 9.5 H19.6" fill="none" stroke="#1e5a9c" stroke-width="1.1"/>
<rect x="15.4" y="20.2" width="4.8" height="8.3" fill="#c8c8c8" stroke="#555" stroke-width="1"/>
<rect x="20.2" y="13.2" width="5.1" height="15.3" fill="#fff" stroke="#333" stroke-width="1"/>
<rect x="25.3" y="16.5" width="5.5" height="12" fill="#72aee6" stroke="#1e5a9c" stroke-width="1"/>
</svg>
<span class="fit a" id="f21" style="left:969.125px;top:102.8px;font-size:12.5px;line-height:12.5px;color:#333;font-weight:500;white-space:nowrap;transform-origin:0 50%;transform:scaleX(0.7663);">データの</span>
<span class="fit a" id="f22" style="left:976.025px;top:117.0px;font-size:12.5px;line-height:12.5px;color:#333;font-weight:500;white-space:nowrap;transform-origin:0 50%;transform:scaleX(1.0096);">選択</span>
<span class="fit a" id="f23" style="left:945.625px;top:158.2px;font-size:12.5px;line-height:12.5px;color:#333;font-weight:500;white-space:nowrap;transform-origin:0 50%;transform:scaleX(0.7808);">データ</span>
<div class="sep" style="left:1027px;top:54px;height:115px"></div>
<svg class="a" style="left:1058px;top:63px" width="25" height="31" viewBox="0 0 25 31">
<rect x="2" y="13" width="8.4" height="16" fill="#c8c8c8" stroke="#333" stroke-width="1"/>
<rect x="10.4" y="2.5" width="8.6" height="26.5" fill="#fff" stroke="#333" stroke-width="1"/>
<rect x="19" y="7.5" width="8" height="21.5" fill="#72a9e0" stroke="#333" stroke-width="1"/>
</svg>
<span class="fit a" id="f24" style="left:1041.825px;top:102.2px;font-size:12.5px;line-height:12.5px;color:#333;font-weight:500;white-space:nowrap;transform-origin:0 50%;transform:scaleX(0.7442);">グラフの種類</span>
<span class="fit a" id="f25" style="left:1054.625px;top:117.0px;font-size:12.5px;line-height:12.5px;color:#333;font-weight:500;white-space:nowrap;transform-origin:0 50%;transform:scaleX(0.9295);">の変更</span>
<span class="fit a" id="f26" style="left:1059.625px;top:158.2px;font-size:12.5px;line-height:12.5px;color:#333;font-weight:500;white-space:nowrap;transform-origin:0 50%;transform:scaleX(1.0096);">種類</span>
<div class="a" style="left:13px;top:173px;width:1070px;height:76px;background:#e6e6e6"></div>
<div class="a" style="left:13px;top:173px;width:1070px;height:6px;background:linear-gradient(#cfcfcf,#e6e6e6)"></div>
<div class="a" style="left:13px;top:184px;width:31px;height:31px;background:#fff;border:1px solid #c6c6c6;border-left:none"></div>
<div class="a" style="left:30px;top:197px;width:0;height:0;border-left:3.5px solid transparent;border-right:3.5px solid transparent;border-top:4px solid #666"></div>
<div class="a" style="left:58px;top:194px;width:2px;height:2px;background:#999;box-shadow:0 4px 0 #999,0 8px 0 #999"></div>
<div class="a" style="left:74px;top:184px;width:110px;height:31px;background:#fff;border:1px solid #c6c6c6"></div>
<div class="a" style="left:187px;top:184px;width:900px;height:31px;background:#fff;border:1px solid #c6c6c6"></div>
<svg class="a" style="left:85px;top:191px" width="100" height="18" viewBox="0 0 100 18"><path d="M3.3 3.3 L12.7 12.7 M12.7 3.3 L3.3 12.7" stroke="#c4c4c4" stroke-width="1.9" fill="none"/><path d="M38.5 8.5 L43.5 13 L50.5 3.3" stroke="#c4c4c4" stroke-width="2.3" fill="none"/></svg>
<div class="a" style="left:159px;top:190px;font-family:'Liberation Serif',serif;font-style:italic;font-weight:bold;font-size:14px;color:#606060">f<span style="font-size:11px;margin-left:-1.5px">x</span></div>
<div class="a" style="left:13px;top:214px;width:1070px;height:1px;background:#c6c6c6"></div>
<div class="hdr" style="left:38.5px;width:72px">B</div>
<div class="a" style="left:37px;top:224px;width:1px;height:25px;background:#bdbdbd"></div>
<div class="hdr" style="left:110.5px;width:72px">C</div>
<div class="a" style="left:109px;top:224px;width:1px;height:25px;background:#bdbdbd"></div>
<div class="hdr" style="left:182.5px;width:72px">D</div>
<div class="a" style="left:181px;top:224px;width:1px;height:25px;background:#bdbdbd"></div>
<div class="hdr" style="left:254.5px;width:72px">E</div>
<div class="a" style="left:253px;top:224px;width:1px;height:25px;background:#bdbdbd"></div>
<div class="hdr" style="left:326.5px;width:72px">F</div>
<div class="a" style="left:325px;top:224px;width:1px;height:25px;background:#bdbdbd"></div>
<div class="hdr" style="left:398.5px;width:72px">G</div>
<div class="a" style="left:397px;top:224px;width:1px;height:25px;background:#bdbdbd"></div>
<div class="hdr" style="left:470.5px;width:72px">H</div>
<div class="a" style="left:469px;top:224px;width:1px;height:25px;background:#bdbdbd"></div>
<div class="hdr" style="left:542.5px;width:72px">I</div>
<div class="a" style="left:541px;top:224px;width:1px;height:25px;background:#bdbdbd"></div>
<div class="hdr" style="left:614.5px;width:72px">J</div>
<div class="a" style="left:613px;top:224px;width:1px;height:25px;background:#bdbdbd"></div>
<div class="hdr" style="left:686.5px;width:72px">K</div>
<div class="a" style="left:685px;top:224px;width:1px;height:25px;background:#bdbdbd"></div>
<div class="hdr" style="left:758.5px;width:72px">L</div>
<div class="a" style="left:757px;top:224px;width:1px;height:25px;background:#bdbdbd"></div>
<div class="hdr" style="left:830.5px;width:72px">M</div>
<div class="a" style="left:829px;top:224px;width:1px;height:25px;background:#bdbdbd"></div>
<div class="hdr" style="left:902.5px;width:72px">N</div>
<div class="a" style="left:901px;top:224px;width:1px;height:25px;background:#bdbdbd"></div>
<div class="hdr" style="left:974.5px;width:72px">O</div>
<div class="a" style="left:973px;top:224px;width:1px;height:25px;background:#bdbdbd"></div>
<div class="hdr" style="left:1046.5px;width:72px">P</div>
<div class="a" style="left:1045px;top:224px;width:1px;height:25px;background:#bdbdbd"></div>
<div class="a" style="left:13px;top:249px;width:1070px;height:1px;background:#9e9e9e"></div>
<div class="a" style="left:38px;top:250px;width:359px;height:24px;background:#f9e7e8"></div>
<div class="a" style="left:38px;top:275px;width:359px;height:249px;background:#e8eef8"></div>
<div class="a" style="left:13px;top:274px;width:1070px;height:1px;background:#d9d9d9"></div>
<div class="a" style="left:13px;top:299px;width:1070px;height:1px;background:#d9d9d9"></div>
<div class="a" style="left:13px;top:324px;width:1070px;height:1px;background:#d9d9d9"></div>
<div class="a" style="left:13px;top:349px;width:1070px;height:1px;background:#d9d9d9"></div>
<div class="a" style="left:13px;top:374px;width:1070px;height:1px;background:#d9d9d9"></div>
<div class="a" style="left:13px;top:399px;width:1070px;height:1px;background:#d9d9d9"></div>
<div class="a" style="left:13px;top:424px;width:1070px;height:1px;background:#d9d9d9"></div>
<div class="a" style="left:13px;top:449px;width:1070px;height:1px;background:#d9d9d9"></div>
<div class="a" style="left:13px;top:474px;width:1070px;height:1px;background:#d9d9d9"></div>
<div class="a" style="left:13px;top:499px;width:1070px;height:1px;background:#d9d9d9"></div>
<div class="a" style="left:13px;top:524px;width:1070px;height:1px;background:#d9d9d9"></div>
<div class="a" style="left:13px;top:549px;width:1070px;height:1px;background:#d9d9d9"></div>
<div class="a" style="left:13px;top:574px;width:1070px;height:1px;background:#d9d9d9"></div>
<div class="a" style="left:13px;top:599px;width:1070px;height:1px;background:#d9d9d9"></div>
<div class="a" style="left:13px;top:624px;width:1070px;height:1px;background:#d9d9d9"></div>
<div class="a" style="left:13px;top:649px;width:1070px;height:1px;background:#d9d9d9"></div>
<div class="a" style="left:13px;top:674px;width:1070px;height:1px;background:#d9d9d9"></div>
<div class="a" style="left:13px;top:699px;width:1070px;height:1px;background:#d9d9d9"></div>
<div class="a" style="left:13px;top:724px;width:1070px;height:1px;background:#d9d9d9"></div>
<div class="a" style="left:13px;top:749px;width:1070px;height:1px;background:#d9d9d9"></div>
<div class="a" style="left:13px;top:774px;width:1070px;height:1px;background:#d9d9d9"></div>
<div class="a" style="left:13px;top:799px;width:1070px;height:1px;background:#d9d9d9"></div>
<div class="a" style="left:37px;top:250px;width:1px;height:560px;background:#d9d9d9"></div>
<div class="a" style="left:109px;top:250px;width:1px;height:560px;background:#d9d9d9"></div>
<div class="a" style="left:181px;top:250px;width:1px;height:560px;background:#d9d9d9"></div>
<div class="a" style="left:253px;top:250px;width:1px;height:560px;background:#d9d9d9"></div>
<div class="a" style="left:325px;top:250px;width:1px;height:560px;background:#d9d9d9"></div>
<div class="a" style="left:397px;top:250px;width:1px;height:560px;background:#d9d9d9"></div>
<div class="a" style="left:469px;top:250px;width:1px;height:560px;background:#d9d9d9"></div>
<div class="a" style="left:541px;top:250px;width:1px;height:560px;background:#d9d9d9"></div>
<div class="a" style="left:613px;top:250px;width:1px;height:560px;background:#d9d9d9"></div>
<div class="a" style="left:685px;top:250px;width:1px;height:560px;background:#d9d9d9"></div>
<div class="a" style="left:757px;top:250px;width:1px;height:560px;background:#d9d9d9"></div>
<div class="a" style="left:829px;top:250px;width:1px;height:560px;background:#d9d9d9"></div>
<div class="a" style="left:901px;top:250px;width:1px;height:560px;background:#d9d9d9"></div>
<div class="a" style="left:973px;top:250px;width:1px;height:560px;background:#d9d9d9"></div>
<div class="a" style="left:1045px;top:250px;width:1px;height:560px;background:#d9d9d9"></div>
<div class="a" style="left:1117px;top:250px;width:1px;height:560px;background:#d9d9d9"></div>
<div class="a" style="left:13px;top:250px;width:23px;height:24px;overflow:hidden"><span class="a" style="right:1px;top:0;line-height:24px;font-size:14px;color:#444;white-space:nowrap">繧｢</span></div>
<div class="a" style="left:13px;top:275px;width:23px;height:24px;overflow:hidden"><span class="a" style="right:-6px;top:0;line-height:24px;font-size:14px;color:#444;white-space:nowrap">驕・</span></div>
<div class="a" style="left:13px;top:300px;width:23px;height:24px;overflow:hidden"><span class="a" style="right:-6px;top:0;line-height:24px;font-size:14px;color:#444;white-space:nowrap">達・</span></div>
<div class="a" style="left:13px;top:325px;width:23px;height:24px;overflow:hidden"><span class="a" style="right:1px;top:0;line-height:24px;font-size:14px;color:#444;white-space:nowrap">句係</span></div>
<div class="a" style="left:13px;top:350px;width:23px;height:24px;overflow:hidden"><span class="a" style="right:1px;top:0;line-height:24px;font-size:14px;color:#444;white-space:nowrap">学係</span></div>
<div class="a" style="left:13px;top:375px;width:23px;height:24px;overflow:hidden"><span class="a" style="right:-6px;top:0;line-height:24px;font-size:14px;color:#444;white-space:nowrap">達・</span></div>
<div class="a" style="left:13px;top:400px;width:23px;height:24px;overflow:hidden"><span class="a" style="right:-6px;top:0;line-height:24px;font-size:14px;color:#444;white-space:nowrap">達・</span></div>
<div class="a" style="left:13px;top:425px;width:23px;height:24px;overflow:hidden"><span class="a" style="right:-6px;top:0;line-height:24px;font-size:14px;color:#444;white-space:nowrap">達・</span></div>
<div class="a" style="left:13px;top:450px;width:23px;height:24px;overflow:hidden"><span class="a" style="right:1px;top:0;line-height:24px;font-size:14px;color:#444;white-space:nowrap">学係</span></div>
<div class="a" style="left:13px;top:475px;width:23px;height:24px;overflow:hidden"><span class="a" style="right:-6px;top:0;line-height:24px;font-size:14px;color:#444;white-space:nowrap">達・</span></div>
<div class="a" style="left:13px;top:500px;width:23px;height:24px;overflow:hidden"><span class="a" style="right:-6px;top:0;line-height:24px;font-size:14px;color:#444;white-space:nowrap">達・</span></div>
<div class="a" style="left:13px;top:525px;width:23px;height:24px;overflow:hidden"><span class="a" style="right:1px;top:0;line-height:24px;font-size:14px;color:#444;white-space:nowrap">以係</span></div>
<div class="a" style="left:13px;top:550px;width:23px;height:24px;overflow:hidden"><span class="a" style="right:-6px;top:0;line-height:24px;font-size:14px;color:#444;white-space:nowrap">達・</span></div>
<div class="a" style="left:13px;top:575px;width:23px;height:24px;overflow:hidden"><span class="a" style="right:1px;top:0;line-height:24px;font-size:14px;color:#444;white-space:nowrap">驛ｽ</span></div>
<div class="a" style="left:13px;top:600px;width:23px;height:24px;overflow:hidden"><span class="a" style="right:1px;top:0;line-height:24px;font-size:14px;color:#444;white-space:nowrap">ｽｷ習</span></div>
<div class="a" style="left:13px;top:625px;width:23px;height:24px;overflow:hidden"><span class="a" style="right:1px;top:0;line-height:24px;font-size:14px;color:#444;white-space:nowrap">厚係</span></div>
<div class="a" style="left:13px;top:650px;width:23px;height:24px;overflow:hidden"><span class="a" style="right:-6px;top:0;line-height:24px;font-size:14px;color:#444;white-space:nowrap">達・</span></div>
<div class="a" style="left:13px;top:675px;width:23px;height:24px;overflow:hidden"><span class="a" style="right:1px;top:0;line-height:24px;font-size:14px;color:#444;white-space:nowrap">習係</span></div>
<div class="a" style="left:13px;top:700px;width:23px;height:24px;overflow:hidden"><span class="a" style="right:1px;top:0;line-height:24px;font-size:14px;color:#444;white-space:nowrap">慮係</span></div>
<div class="a" style="left:13px;top:725px;width:23px;height:24px;overflow:hidden"><span class="a" style="right:-6px;top:0;line-height:24px;font-size:14px;color:#444;white-space:nowrap">達・</span></div>
<div class="a" style="left:13px;top:750px;width:23px;height:24px;overflow:hidden"><span class="a" style="right:1px;top:0;line-height:24px;font-size:14px;color:#444;white-space:nowrap">学係</span></div>
<div class="a" style="left:13px;top:775px;width:23px;height:24px;overflow:hidden"><span class="a" style="right:-6px;top:0;line-height:24px;font-size:14px;color:#444;white-space:nowrap">達・</span></div>
<div class="a" style="left:13px;top:800px;width:23px;height:24px;overflow:hidden"><span class="a" style="right:1px;top:0;line-height:24px;font-size:14px;color:#444;white-space:nowrap">達</span></div>
<div class="cell" style="left:37px;top:251px;width:70px">1968</div>
<div class="cell" style="left:109px;top:251px;width:70px">1969</div>
<div class="cell" style="left:181px;top:251px;width:70px">1970</div>
<div class="cell" style="left:253px;top:251px;width:70px">1971</div>
<div class="cell" style="left:325px;top:251px;width:70px">1972</div>
<div class="cell" style="left:397px;top:251px;width:70px">1973</div>
<div class="cell" style="left:469px;top:251px;width:70px">1974</div>
<div class="cell" style="left:541px;top:251px;width:70px">1975</div>
<div class="cell" style="left:613px;top:251px;width:70px">1976</div>
<div class="cell" style="left:685px;top:251px;width:70px">1977</div>
<div class="cell" style="left:757px;top:251px;width:70px">1978</div>
<div class="cell" style="left:829px;top:251px;width:70px">1979</div>
<div class="cell" style="left:901px;top:251px;width:70px">1980</div>
<div class="cell" style="left:973px;top:251px;width:70px">1981</div>
<div class="cell" style="left:1045px;top:251px;width:70px">1982</div>
<div class="cell" style="left:37px;top:276px;width:70px">5378599</div>
<div class="cell" style="left:109px;top:276px;width:70px">5329609</div>
<div class="cell" style="left:181px;top:276px;width:70px">5238676</div>
<div class="cell" style="left:253px;top:276px;width:70px">5229096</div>
<div class="cell" style="left:325px;top:276px;width:70px">5253074</div>
<div class="cell" style="left:397px;top:276px;width:70px">5282521</div>
<div class="cell" style="left:469px;top:276px;width:70px">5333821</div>
<div class="cell" style="left:541px;top:276px;width:70px">5375831</div>
<div class="cell" style="left:613px;top:276px;width:70px">5421012</div>
<div class="cell" style="left:685px;top:276px;width:70px">5468646</div>
<div class="cell" style="left:757px;top:276px;width:70px">5517325</div>
<div class="cell" style="left:829px;top:276px;width:70px">5556960</div>
<div class="cell" style="left:901px;top:276px;width:70px">5589342</div>
<div class="cell" style="left:973px;top:276px;width:70px">5609996</div>
<div class="cell" style="left:1045px;top:276px;width:70px">5631234</div>
<div class="cell" style="left:37px;top:301px;width:70px">1500760</div>
<div class="cell" style="left:109px;top:301px;width:70px">1494872</div>
<div class="cell" style="left:181px;top:301px;width:70px">1483935</div>
<div class="cell" style="left:253px;top:301px;width:70px">1482267</div>
<div class="cell" style="left:325px;top:301px;width:70px">1486368</div>
<div class="cell" style="left:397px;top:301px;width:70px">1492056</div>
<div class="cell" style="left:469px;top:301px;width:70px">1500507</div>
<div class="cell" style="left:541px;top:301px;width:70px">1509905</div>
<div class="cell" style="left:613px;top:301px;width:70px">1523488</div>
<div class="cell" style="left:685px;top:301px;width:70px">1532915</div>
<div class="cell" style="left:757px;top:301px;width:70px">1542141</div>
<div class="cell" style="left:829px;top:301px;width:70px">1548050</div>
<div class="cell" style="left:901px;top:301px;width:70px">1551648</div>
<div class="cell" style="left:973px;top:301px;width:70px">1552940</div>
<div class="cell" style="left:1045px;top:301px;width:70px">1553321</div>
<div class="cell" style="left:37px;top:326px;width:70px">1446832</div>
<div class="cell" style="left:109px;top:326px;width:70px">1428346</div>
<div class="cell" style="left:181px;top:326px;width:70px">1415081</div>
<div class="cell" style="left:253px;top:326px;width:70px">1403850</div>
<div class="cell" style="left:325px;top:326px;width:70px">1398305</div>
<div class="cell" style="left:397px;top:326px;width:70px">1398425</div>
<div class="cell" style="left:469px;top:326px;width:70px">1400201</div>
<div class="cell" style="left:541px;top:326px;width:70px">1408057</div>
<div class="cell" style="left:613px;top:326px;width:70px">1415082</div>
<div class="cell" style="left:685px;top:326px;width:70px">1421389</div>
<div class="cell" style="left:757px;top:326px;width:70px">1426803</div>
<div class="cell" style="left:829px;top:326px;width:70px">1433751</div>
<div class="cell" style="left:901px;top:326px;width:70px">1438122</div>
<div class="cell" style="left:973px;top:326px;width:70px">1442471</div>
<div class="cell" style="left:1045px;top:326px;width:70px">1445510</div>
<div class="cell" style="left:37px;top:351px;width:70px">1819233</div>
<div class="cell" style="left:109px;top:351px;width:70px">1819946</div>
<div class="cell" style="left:181px;top:351px;width:70px">1820423</div>
<div class="cell" style="left:253px;top:351px;width:70px">1830057</div>
<div class="cell" style="left:325px;top:351px;width:70px">1849466</div>
<div class="cell" style="left:397px;top:351px;width:70px">1804608</div>
<div class="cell" style="left:469px;top:351px;width:70px">1801701</div>
<div class="cell" style="left:541px;top:351px;width:70px">1910450</div>
<div class="cell" style="left:613px;top:351px;width:70px">1945166</div>
<div class="cell" style="left:685px;top:351px;width:70px">1982350</div>
<div class="cell" style="left:757px;top:351px;width:70px">2003541</div>
<div class="cell" style="left:829px;top:351px;width:70px">2031551</div>
<div class="cell" style="left:901px;top:351px;width:70px">2055290</div>
<div class="cell" style="left:973px;top:351px;width:70px">2075130</div>
<div class="cell" style="left:1045px;top:351px;width:70px">2091234</div>
<div class="cell" style="left:37px;top:376px;width:70px">1300012</div>
<div class="cell" style="left:109px;top:376px;width:70px">1284448</div>
<div class="cell" style="left:181px;top:376px;width:70px">1271203</div>
<div class="cell" style="left:253px;top:376px;width:70px">1263144</div>
<div class="cell" style="left:325px;top:376px;width:70px">1255699</div>
<div class="cell" style="left:397px;top:376px;width:70px">1254321</div>
<div class="cell" style="left:469px;top:376px;width:70px">1250000</div>
<div class="cell" style="left:541px;top:376px;width:70px">1250000</div>
<div class="cell" style="left:613px;top:376px;width:70px">1250000</div>
<div class="cell" style="left:685px;top:376px;width:70px">1250000</div>
<div class="cell" style="left:757px;top:376px;width:70px">1250000</div>
<div class="cell" style="left:829px;top:376px;width:70px">1250000</div>
<div class="cell" style="left:901px;top:376px;width:70px">1250000</div>
<div class="cell" style="left:973px;top:376px;width:70px">1250000</div>
<div class="cell" style="left:1045px;top:376px;width:70px">1260000</div>
<div class="cell" style="left:37px;top:401px;width:70px">1252166</div>
<div class="cell" style="left:109px;top:401px;width:70px">1243807</div>
<div class="cell" style="left:181px;top:401px;width:70px">1235136</div>
<div class="cell" style="left:253px;top:401px;width:70px">1228720</div>
<div class="cell" style="left:325px;top:401px;width:70px">1226918</div>
<div class="cell" style="left:397px;top:401px;width:70px">1224321</div>
<div class="cell" style="left:469px;top:401px;width:70px">1220000</div>
<div class="cell" style="left:541px;top:401px;width:70px">1220000</div>
<div class="cell" style="left:613px;top:401px;width:70px">1220000</div>
<div class="cell" style="left:685px;top:401px;width:70px">1220000</div>
<div class="cell" style="left:757px;top:401px;width:70px">1220000</div>
<div class="cell" style="left:829px;top:401px;width:70px">1220000</div>
<div class="cell" style="left:901px;top:401px;width:70px">1220000</div>
<div class="cell" style="left:973px;top:401px;width:70px">1220000</div>
<div class="cell" style="left:1045px;top:401px;width:70px">1200000</div>
<div class="cell" style="left:37px;top:426px;width:70px">1986605</div>
<div class="cell" style="left:109px;top:426px;width:70px">1982392</div>
<div class="cell" style="left:181px;top:426px;width:70px">1972367</div>
<div class="cell" style="left:253px;top:426px;width:70px">1960495</div>
<div class="cell" style="left:325px;top:426px;width:70px">1959404</div>
<div class="cell" style="left:397px;top:426px;width:70px">1964321</div>
<div class="cell" style="left:469px;top:426px;width:70px">1960000</div>
<div class="cell" style="left:541px;top:426px;width:70px">1960000</div>
<div class="cell" style="left:613px;top:426px;width:70px">1960000</div>
<div class="cell" style="left:685px;top:426px;width:70px">1960000</div>
<div class="cell" style="left:757px;top:426px;width:70px">1960000</div>
<div class="cell" style="left:829px;top:426px;width:70px">1960000</div>
<div class="cell" style="left:901px;top:426px;width:70px">1960000</div>
<div class="cell" style="left:973px;top:426px;width:70px">1960000</div>
<div class="cell" style="left:1045px;top:426px;width:70px">2060000</div>
<div class="cell" style="left:37px;top:451px;width:70px">2103581</div>
<div class="cell" style="left:109px;top:451px;width:70px">2116575</div>
<div class="cell" style="left:181px;top:451px;width:70px">2146812</div>
<div class="cell" style="left:253px;top:451px;width:70px">2194478</div>
<div class="cell" style="left:325px;top:451px;width:70px">2226514</div>
<div class="cell" style="left:397px;top:451px;width:70px">2254321</div>
<div class="cell" style="left:469px;top:451px;width:70px">2250000</div>
<div class="cell" style="left:541px;top:451px;width:70px">2250000</div>
<div class="cell" style="left:613px;top:451px;width:70px">2250000</div>
<div class="cell" style="left:685px;top:451px;width:70px">2250000</div>
<div class="cell" style="left:757px;top:451px;width:70px">2250000</div>
<div class="cell" style="left:829px;top:451px;width:70px">2250000</div>
<div class="cell" style="left:901px;top:451px;width:70px">2250000</div>
<div class="cell" style="left:973px;top:451px;width:70px">2250000</div>
<div class="cell" style="left:1045px;top:451px;width:70px">2630000</div>
<div class="cell" style="left:37px;top:476px;width:70px">1561647</div>
<div class="cell" style="left:109px;top:476px;width:70px">1580122</div>
<div class="cell" style="left:181px;top:476px;width:70px">1602000</div>
<div class="cell" style="left:253px;top:476px;width:70px">1626741</div>
<div class="cell" style="left:325px;top:476px;width:70px">1649069</div>
<div class="cell" style="left:397px;top:476px;width:70px">1674321</div>
<div class="cell" style="left:469px;top:476px;width:70px">1670000</div>
<div class="cell" style="left:541px;top:476px;width:70px">1670000</div>
<div class="cell" style="left:613px;top:476px;width:70px">1670000</div>
<div class="cell" style="left:685px;top:476px;width:70px">1670000</div>
<div class="cell" style="left:757px;top:476px;width:70px">1670000</div>
<div class="cell" style="left:829px;top:476px;width:70px">1670000</div>
<div class="cell" style="left:901px;top:476px;width:70px">1670000</div>
<div class="cell" style="left:973px;top:476px;width:70px">1670000</div>
<div class="cell" style="left:1045px;top:476px;width:70px">1830000</div>
<div class="cell" style="left:37px;top:501px;width:70px">1648867</div>
<div class="cell" style="left:109px;top:501px;width:70px">1661573</div>
<div class="cell" style="left:181px;top:501px;width:70px">1680632</div>
<div class="cell" style="left:253px;top:501px;width:70px">1698426</div>
<div class="cell" style="left:325px;top:501px;width:70px">1718499</div>
<div class="cell" style="left:397px;top:501px;width:70px">1744321</div>
<div class="cell" style="left:469px;top:501px;width:70px">1740000</div>
<div class="cell" style="left:541px;top:501px;width:70px">1740000</div>
<div class="cell" style="left:613px;top:501px;width:70px">1740000</div>
<div class="cell" style="left:685px;top:501px;width:70px">1740000</div>
<div class="cell" style="left:757px;top:501px;width:70px">1740000</div>
<div class="cell" style="left:829px;top:501px;width:70px">1740000</div>
<div class="cell" style="left:901px;top:501px;width:70px">1740000</div>
<div class="cell" style="left:973px;top:501px;width:70px">1740000</div>
<div class="cell" style="left:1045px;top:501px;width:70px">1890000</div>
<div class="cell" style="left:37px;top:526px;width:70px">3396271</div>
<div class="cell" style="left:109px;top:526px;width:70px">3561667</div>
<div class="cell" style="left:181px;top:526px;width:70px">3739898</div>
<div class="cell" style="left:253px;top:526px;width:70px">3937565</div>
<div class="cell" style="left:325px;top:526px;width:70px">4136904</div>
<div class="cell" style="left:397px;top:526px;width:70px">4334321</div>
<div class="cell" style="left:469px;top:526px;width:70px">4330000</div>
<div class="cell" style="left:541px;top:526px;width:70px">4330000</div>
<div class="cell" style="left:613px;top:526px;width:70px">4330000</div>
<div class="cell" style="left:685px;top:526px;width:70px">4330000</div>
<div class="cell" style="left:757px;top:526px;width:70px">4330000</div>
<div class="cell" style="left:829px;top:526px;width:70px">4330000</div>
<div class="cell" style="left:901px;top:526px;width:70px">4330000</div>
<div class="cell" style="left:973px;top:526px;width:70px">4330000</div>
<div class="cell" style="left:1045px;top:526px;width:70px">5520000</div>
<div class="cell" style="left:37px;top:551px;width:70px">3125179</div>
<div class="cell" style="left:109px;top:551px;width:70px">3284527</div>
<div class="cell" style="left:181px;top:551px;width:70px">3440674</div>
<div class="cell" style="left:253px;top:551px;width:70px">3587068</div>
<div class="cell" style="left:325px;top:551px;width:70px">3747355</div>
<div class="cell" style="left:397px;top:551px;width:70px">3904321</div>
<div class="cell" style="left:469px;top:551px;width:70px">3900000</div>
<div class="cell" style="left:541px;top:551px;width:70px">3900000</div>
<div class="cell" style="left:613px;top:551px;width:70px">3900000</div>
<div class="cell" style="left:685px;top:551px;width:70px">3900000</div>
<div class="cell" style="left:757px;top:551px;width:70px">3900000</div>
<div class="cell" style="left:829px;top:551px;width:70px">3900000</div>
<div class="cell" style="left:901px;top:551px;width:70px">3900000</div>
<div class="cell" style="left:973px;top:551px;width:70px">3900000</div>
<div class="cell" style="left:1045px;top:551px;width:70px">4950000</div>
<div class="cell" style="left:37px;top:576px;width:70px">10863728</div>
<div class="cell" style="left:109px;top:576px;width:70px">11000747</div>
<div class="cell" style="left:181px;top:576px;width:70px">11094578</div>
<div class="cell" style="left:253px;top:576px;width:70px">11188248</div>
<div class="cell" style="left:325px;top:576px;width:70px">11276235</div>
<div class="cell" style="left:397px;top:576px;width:70px">11324321</div>
<div class="cell" style="left:469px;top:576px;width:70px">11320000</div>
<div class="cell" style="left:541px;top:576px;width:70px">11320000</div>
<div class="cell" style="left:613px;top:576px;width:70px">11320000</div>
<div class="cell" style="left:685px;top:576px;width:70px">11320000</div>
<div class="cell" style="left:757px;top:576px;width:70px">11320000</div>
<div class="cell" style="left:829px;top:576px;width:70px">11320000</div>
<div class="cell" style="left:901px;top:576px;width:70px">11320000</div>
<div class="cell" style="left:973px;top:576px;width:70px">11320000</div>
<div class="cell" style="left:1045px;top:576px;width:70px">11380000</div>
<div class="cell" style="left:37px;top:601px;width:70px">4877054</div>
<div class="cell" style="left:109px;top:601px;width:70px">5085465</div>
<div class="cell" style="left:181px;top:601px;width:70px">5295473</div>
<div class="cell" style="left:253px;top:601px;width:70px">5533338</div>
<div class="cell" style="left:325px;top:601px;width:70px">5752639</div>
<div class="cell" style="left:397px;top:601px;width:70px">5934321</div>
<div class="cell" style="left:469px;top:601px;width:70px">5930000</div>
<div class="cell" style="left:541px;top:601px;width:70px">5930000</div>
<div class="cell" style="left:613px;top:601px;width:70px">5930000</div>
<div class="cell" style="left:685px;top:601px;width:70px">5930000</div>
<div class="cell" style="left:757px;top:601px;width:70px">5930000</div>
<div class="cell" style="left:829px;top:601px;width:70px">5930000</div>
<div class="cell" style="left:901px;top:601px;width:70px">5930000</div>
<div class="cell" style="left:973px;top:601px;width:70px">5930000</div>
<div class="cell" style="left:1045px;top:601px;width:70px">7020000</div>
<div class="cell" style="left:37px;top:626px;width:70px">2414955</div>
<div class="cell" style="left:109px;top:626px;width:70px">2394100</div>
<div class="cell" style="left:181px;top:626px;width:70px">2382226</div>
<div class="cell" style="left:253px;top:626px;width:70px">2372068</div>
<div class="cell" style="left:325px;top:626px;width:70px">2367803</div>
<div class="cell" style="left:397px;top:626px;width:70px">2364321</div>
<div class="cell" style="left:469px;top:626px;width:70px">2360000</div>
<div class="cell" style="left:541px;top:626px;width:70px">2360000</div>
<div class="cell" style="left:613px;top:626px;width:70px">2360000</div>
<div class="cell" style="left:685px;top:626px;width:70px">2360000</div>
<div class="cell" style="left:757px;top:626px;width:70px">2360000</div>
<div class="cell" style="left:829px;top:626px;width:70px">2360000</div>
<div class="cell" style="left:901px;top:626px;width:70px">2360000</div>
<div class="cell" style="left:973px;top:626px;width:70px">2360000</div>
<div class="cell" style="left:1045px;top:626px;width:70px">2460000</div>
<div class="cell" style="left:37px;top:651px;width:70px">1031918</div>
<div class="cell" style="left:109px;top:651px;width:70px">1032686</div>
<div class="cell" style="left:181px;top:651px;width:70px">1038945</div>
<div class="cell" style="left:253px;top:651px;width:70px">1047165</div>
<div class="cell" style="left:325px;top:651px;width:70px">1055825</div>
<div class="cell" style="left:397px;top:651px;width:70px">1064321</div>
<div class="cell" style="left:469px;top:651px;width:70px">1060000</div>
<div class="cell" style="left:541px;top:651px;width:70px">1060000</div>
<div class="cell" style="left:613px;top:651px;width:70px">1060000</div>
<div class="cell" style="left:685px;top:651px;width:70px">1060000</div>
<div class="cell" style="left:757px;top:651px;width:70px">1060000</div>
<div class="cell" style="left:829px;top:651px;width:70px">1060000</div>
<div class="cell" style="left:901px;top:651px;width:70px">1060000</div>
<div class="cell" style="left:973px;top:651px;width:70px">1060000</div>
<div class="cell" style="left:1045px;top:651px;width:70px">1110000</div>
<div class="cell" style="left:37px;top:676px;width:70px">999991</div>
<div class="cell" style="left:109px;top:676px;width:70px">993623</div>
<div class="cell" style="left:181px;top:676px;width:70px">995641</div>
<div class="cell" style="left:253px;top:676px;width:70px">1018331</div>
<div class="cell" style="left:325px;top:676px;width:70px">1026260</div>
<div class="cell" style="left:397px;top:676px;width:70px">1034321</div>
<div class="cell" style="left:469px;top:676px;width:70px">1030000</div>
<div class="cell" style="left:541px;top:676px;width:70px">1030000</div>
<div class="cell" style="left:613px;top:676px;width:70px">1030000</div>
<div class="cell" style="left:685px;top:676px;width:70px">1030000</div>
<div class="cell" style="left:757px;top:676px;width:70px">1030000</div>
<div class="cell" style="left:829px;top:676px;width:70px">1030000</div>
<div class="cell" style="left:901px;top:676px;width:70px">1030000</div>
<div class="cell" style="left:973px;top:676px;width:70px">1030000</div>
<div class="cell" style="left:1045px;top:676px;width:70px">1120000</div>
<div class="cell" style="left:37px;top:701px;width:70px">753059</div>
<div class="cell" style="left:109px;top:701px;width:70px">749033</div>
<div class="cell" style="left:181px;top:701px;width:70px">748799</div>
<div class="cell" style="left:253px;top:701px;width:70px">750104</div>
<div class="cell" style="left:325px;top:701px;width:70px">754261</div>
<div class="cell" style="left:397px;top:701px;width:70px">764321</div>
<div class="cell" style="left:469px;top:701px;width:70px">760000</div>
<div class="cell" style="left:541px;top:701px;width:70px">760000</div>
<div class="cell" style="left:613px;top:701px;width:70px">760000</div>
<div class="cell" style="left:685px;top:701px;width:70px">760000</div>
<div class="cell" style="left:757px;top:701px;width:70px">760000</div>
<div class="cell" style="left:829px;top:701px;width:70px">760000</div>
<div class="cell" style="left:901px;top:701px;width:70px">760000</div>
<div class="cell" style="left:973px;top:701px;width:70px">760000</div>
<div class="cell" style="left:1045px;top:701px;width:70px">800000</div>
<div class="cell" style="left:37px;top:726px;width:70px">775789</div>
<div class="cell" style="left:109px;top:726px;width:70px">777155</div>
<div class="cell" style="left:181px;top:726px;width:70px">775347</div>
<div class="cell" style="left:253px;top:726px;width:70px">776496</div>
<div class="cell" style="left:325px;top:726px;width:70px">779049</div>
<div class="cell" style="left:397px;top:726px;width:70px">784321</div>
<div class="cell" style="left:469px;top:726px;width:70px">780000</div>
<div class="cell" style="left:541px;top:726px;width:70px">780000</div>
<div class="cell" style="left:613px;top:726px;width:70px">780000</div>
<div class="cell" style="left:685px;top:726px;width:70px">780000</div>
<div class="cell" style="left:757px;top:726px;width:70px">780000</div>
<div class="cell" style="left:829px;top:726px;width:70px">780000</div>
<div class="cell" style="left:901px;top:726px;width:70px">780000</div>
<div class="cell" style="left:973px;top:726px;width:70px">780000</div>
<div class="cell" style="left:1045px;top:726px;width:70px">820000</div>
<div class="cell" style="left:37px;top:751px;width:70px">1974569</div>
<div class="cell" style="left:109px;top:751px;width:70px">1970393</div>
<div class="cell" style="left:181px;top:751px;width:70px">1968089</div>
<div class="cell" style="left:253px;top:751px;width:70px">1968122</div>
<div class="cell" style="left:325px;top:751px;width:70px">1976886</div>
<div class="cell" style="left:397px;top:751px;width:70px">1984321</div>
<div class="cell" style="left:469px;top:751px;width:70px">1980000</div>
<div class="cell" style="left:541px;top:751px;width:70px">1980000</div>
<div class="cell" style="left:613px;top:751px;width:70px">1980000</div>
<div class="cell" style="left:685px;top:751px;width:70px">1980000</div>
<div class="cell" style="left:757px;top:751px;width:70px">1980000</div>
<div class="cell" style="left:829px;top:751px;width:70px">1980000</div>
<div class="cell" style="left:901px;top:751px;width:70px">1980000</div>
<div class="cell" style="left:973px;top:751px;width:70px">1980000</div>
<div class="cell" style="left:1045px;top:751px;width:70px">2100000</div>
<div class="cell" style="left:37px;top:776px;width:70px">1761663</div>
<div class="cell" style="left:109px;top:776px;width:70px">1768893</div>
<div class="cell" style="left:181px;top:776px;width:70px">1776189</div>
<div class="cell" style="left:253px;top:776px;width:70px">1795448</div>
<div class="cell" style="left:325px;top:776px;width:70px">1818712</div>
<div class="cell" style="left:397px;top:776px;width:70px">1844358</div>
<div class="cell" style="left:469px;top:776px;width:70px">1861218</div>
<div class="cell" style="left:541px;top:776px;width:70px">1879461</div>
<div class="cell" style="left:613px;top:776px;width:70px">1900614</div>
<div class="cell" style="left:685px;top:776px;width:70px">1919099</div>
<div class="cell" style="left:757px;top:776px;width:70px">1937010</div>
<div class="cell" style="left:829px;top:776px;width:70px">1952347</div>
<div class="cell" style="left:901px;top:776px;width:70px">1968219</div>
<div class="cell" style="left:973px;top:776px;width:70px">1981779</div>
<div class="cell" style="left:1045px;top:776px;width:70px">1990000</div>
<div class="a" style="left:36px;top:250px;width:2px;height:24px;background:#c1343c"></div>
<div class="a" style="left:397px;top:250px;width:2px;height:24px;background:#c1343c"></div>
<div class="a" style="left:38px;top:274px;width:359px;height:2px;background:#c1343c"></div>
<div class="a" style="left:35px;top:250px;width:5px;height:2px;background:#c1343c"></div>
<div class="a" style="left:395px;top:250px;width:5px;height:2px;background:#c1343c"></div>
<div class="a" style="left:35px;top:272px;width:5px;height:5px;background:#c1343c"></div>
<div class="a" style="left:395px;top:272px;width:5px;height:5px;background:#c1343c"></div>
<div class="a" style="left:36px;top:277px;width:2px;height:247px;background:#3b68b5"></div>
<div class="a" style="left:397px;top:277px;width:2px;height:247px;background:#3b68b5"></div>
<div class="a" style="left:38px;top:524px;width:359px;height:2px;background:#3b68b5"></div>
<div class="a" style="left:35px;top:522px;width:5px;height:5px;background:#3b68b5"></div>
<div class="a" style="left:395px;top:522px;width:5px;height:5px;background:#3b68b5"></div>
<svg class="a" style="left:0;top:0" width="1083" height="806" viewBox="0 0 1083 806"><defs><radialGradient id="cbg" gradientUnits="userSpaceOnUse" cx="745" cy="520" r="380" gradientTransform="translate(745 520) scale(1 0.85) translate(-745 -520)"><stop offset="0" stop-color="#575757"/><stop offset="0.55" stop-color="#404040"/><stop offset="1" stop-color="#262626"/></radialGradient><linearGradient id="bg0" x1="0" y1="0" x2="1" y2="0"><stop offset="0" stop-color="#5b85da"/><stop offset="1" stop-color="#3f66b8"/></linearGradient><linearGradient id="bg1" x1="0" y1="0" x2="1" y2="0"><stop offset="0" stop-color="#f59048"/><stop offset="1" stop-color="#e0702a"/></linearGradient><linearGradient id="bg2" x1="0" y1="0" x2="1" y2="0"><stop offset="0" stop-color="#bdbdbd"/><stop offset="1" stop-color="#9a9a9a"/></linearGradient><linearGradient id="bg3" x1="0" y1="0" x2="1" y2="0"><stop offset="0" stop-color="#ffcf3a"/><stop offset="1" stop-color="#f2b400"/></linearGradient><linearGradient id="bg4" x1="0" y1="0" x2="1" y2="0"><stop offset="0" stop-color="#6fb0ec"/><stop offset="1" stop-color="#4f8fcf"/></linearGradient><filter id="tsh" x="-10%" y="-30%" width="130%" height="160%"><feDropShadow dx="1.5" dy="1.5" stdDeviation="0.8" flood-color="#000" flood-opacity="0.8"/></filter></defs><rect x="432.5" y="362.5" width="612" height="419" fill="url(#cbg)" stroke="#8c8c8c" stroke-width="1.2"/><line x1="526.6" y1="622.5" x2="1030.5" y2="622.5" stroke="#5e5e5e" stroke-width="1"/><line x1="526.6" y1="582.5" x2="1030.5" y2="582.5" stroke="#5e5e5e" stroke-width="1"/><line x1="526.6" y1="542.5" x2="1030.5" y2="542.5" stroke="#5e5e5e" stroke-width="1"/><line x1="526.6" y1="502.5" x2="1030.5" y2="502.5" stroke="#5e5e5e" stroke-width="1"/><line x1="526.6" y1="463.5" x2="1030.5" y2="463.5" stroke="#5e5e5e" stroke-width="1"/><line x1="526.6" y1="423.5" x2="1030.5" y2="423.5" stroke="#5e5e5e" stroke-width="1"/><rect x="530.8" y="447.7" width="8.7" height="213.8" fill="#1a1a1a" opacity="0.6"/><rect x="530.8" y="447.7" width="7.9" height="213.8" fill="url(#bg0)"/><rect x="539.5" y="449.6" width="8.7" height="211.9" fill="#1a1a1a" opacity="0.6"/><rect x="539.5" y="449.6" width="7.9" height="211.9" fill="url(#bg1)"/><rect x="548.2" y="453.3" width="8.7" height="208.2" fill="#1a1a1a" opacity="0.6"/><rect x="548.2" y="453.3" width="7.9" height="208.2" fill="url(#bg2)"/><rect x="556.9" y="453.6" width="8.7" height="207.9" fill="#1a1a1a" opacity="0.6"/><rect x="556.9" y="453.6" width="7.9" height="207.9" fill="url(#bg3)"/><rect x="565.6" y="452.7" width="8.7" height="208.8" fill="#1a1a1a" opacity="0.6"/><rect x="565.6" y="452.7" width="7.9" height="208.8" fill="url(#bg4)"/><rect x="581.2" y="601.8" width="8.7" height="59.7" fill="#1a1a1a" opacity="0.6"/><rect x="581.2" y="601.8" width="7.9" height="59.7" fill="url(#bg0)"/><rect x="589.9" y="602.1" width="8.7" height="59.4" fill="#1a1a1a" opacity="0.6"/><rect x="589.9" y="602.1" width="7.9" height="59.4" fill="url(#bg1)"/><rect x="598.6" y="602.5" width="8.7" height="59.0" fill="#1a1a1a" opacity="0.6"/><rect x="598.6" y="602.5" width="7.9" height="59.0" fill="url(#bg2)"/><rect x="607.3" y="602.6" width="8.7" height="58.9" fill="#1a1a1a" opacity="0.6"/><rect x="607.3" y="602.6" width="7.9" height="58.9" fill="url(#bg3)"/><rect x="616.0" y="602.4" width="8.7" height="59.1" fill="#1a1a1a" opacity="0.6"/><rect x="616.0" y="602.4" width="7.9" height="59.1" fill="url(#bg4)"/><rect x="631.6" y="604.0" width="8.7" height="57.5" fill="#1a1a1a" opacity="0.6"/><rect x="631.6" y="604.0" width="7.9" height="57.5" fill="url(#bg0)"/><rect x="640.3" y="604.7" width="8.7" height="56.8" fill="#1a1a1a" opacity="0.6"/><rect x="640.3" y="604.7" width="7.9" height="56.8" fill="url(#bg1)"/><rect x="649.0" y="605.3" width="8.7" height="56.2" fill="#1a1a1a" opacity="0.6"/><rect x="649.0" y="605.3" width="7.9" height="56.2" fill="url(#bg2)"/><rect x="657.7" y="605.7" width="8.7" height="55.8" fill="#1a1a1a" opacity="0.6"/><rect x="657.7" y="605.7" width="7.9" height="55.8" fill="url(#bg3)"/><rect x="666.4" y="605.9" width="8.7" height="55.6" fill="#1a1a1a" opacity="0.6"/><rect x="666.4" y="605.9" width="7.9" height="55.6" fill="url(#bg4)"/><rect x="682.0" y="589.2" width="8.7" height="72.3" fill="#1a1a1a" opacity="0.6"/><rect x="682.0" y="589.2" width="7.9" height="72.3" fill="url(#bg0)"/><rect x="690.7" y="589.2" width="8.7" height="72.3" fill="#1a1a1a" opacity="0.6"/><rect x="690.7" y="589.2" width="7.9" height="72.3" fill="url(#bg1)"/><rect x="699.4" y="589.1" width="8.7" height="72.4" fill="#1a1a1a" opacity="0.6"/><rect x="699.4" y="589.1" width="7.9" height="72.4" fill="url(#bg2)"/><rect x="708.1" y="588.8" width="8.7" height="72.7" fill="#1a1a1a" opacity="0.6"/><rect x="708.1" y="588.8" width="7.9" height="72.7" fill="url(#bg3)"/><rect x="716.8" y="588.0" width="8.7" height="73.5" fill="#1a1a1a" opacity="0.6"/><rect x="716.8" y="588.0" width="7.9" height="73.5" fill="url(#bg4)"/><rect x="732.4" y="609.8" width="8.7" height="51.7" fill="#1a1a1a" opacity="0.6"/><rect x="732.4" y="609.8" width="7.9" height="51.7" fill="url(#bg0)"/><rect x="741.1" y="610.4" width="8.7" height="51.1" fill="#1a1a1a" opacity="0.6"/><rect x="741.1" y="610.4" width="7.9" height="51.1" fill="url(#bg1)"/><rect x="749.8" y="611.0" width="8.7" height="50.5" fill="#1a1a1a" opacity="0.6"/><rect x="749.8" y="611.0" width="7.9" height="50.5" fill="url(#bg2)"/><rect x="758.5" y="611.3" width="8.7" height="50.2" fill="#1a1a1a" opacity="0.6"/><rect x="758.5" y="611.3" width="7.9" height="50.2" fill="url(#bg3)"/><rect x="767.2" y="611.6" width="8.7" height="49.9" fill="#1a1a1a" opacity="0.6"/><rect x="767.2" y="611.6" width="7.9" height="49.9" fill="url(#bg4)"/><rect x="782.8" y="611.7" width="8.7" height="49.8" fill="#1a1a1a" opacity="0.6"/><rect x="782.8" y="611.7" width="7.9" height="49.8" fill="url(#bg0)"/><rect x="791.5" y="612.1" width="8.7" height="49.4" fill="#1a1a1a" opacity="0.6"/><rect x="791.5" y="612.1" width="7.9" height="49.4" fill="url(#bg1)"/><rect x="800.1" y="612.4" width="8.7" height="49.1" fill="#1a1a1a" opacity="0.6"/><rect x="800.1" y="612.4" width="7.9" height="49.1" fill="url(#bg2)"/><rect x="808.9" y="612.7" width="8.7" height="48.8" fill="#1a1a1a" opacity="0.6"/><rect x="808.9" y="612.7" width="7.9" height="48.8" fill="url(#bg3)"/><rect x="817.5" y="612.7" width="8.7" height="48.8" fill="#1a1a1a" opacity="0.6"/><rect x="817.5" y="612.7" width="7.9" height="48.8" fill="url(#bg4)"/><rect x="833.1" y="582.5" width="8.7" height="79.0" fill="#1a1a1a" opacity="0.6"/><rect x="833.1" y="582.5" width="7.9" height="79.0" fill="url(#bg0)"/><rect x="841.8" y="582.7" width="8.7" height="78.8" fill="#1a1a1a" opacity="0.6"/><rect x="841.8" y="582.7" width="7.9" height="78.8" fill="url(#bg1)"/><rect x="850.5" y="583.1" width="8.7" height="78.4" fill="#1a1a1a" opacity="0.6"/><rect x="850.5" y="583.1" width="7.9" height="78.4" fill="url(#bg2)"/><rect x="859.2" y="583.6" width="8.7" height="77.9" fill="#1a1a1a" opacity="0.6"/><rect x="859.2" y="583.6" width="7.9" height="77.9" fill="url(#bg3)"/><rect x="867.9" y="583.6" width="8.7" height="77.9" fill="#1a1a1a" opacity="0.6"/><rect x="867.9" y="583.6" width="7.9" height="77.9" fill="url(#bg4)"/><rect x="883.5" y="577.9" width="8.7" height="83.6" fill="#1a1a1a" opacity="0.6"/><rect x="883.5" y="577.9" width="7.9" height="83.6" fill="url(#bg0)"/><rect x="892.2" y="577.4" width="8.7" height="84.1" fill="#1a1a1a" opacity="0.6"/><rect x="892.2" y="577.4" width="7.9" height="84.1" fill="url(#bg1)"/><rect x="900.9" y="576.2" width="8.7" height="85.3" fill="#1a1a1a" opacity="0.6"/><rect x="900.9" y="576.2" width="7.9" height="85.3" fill="url(#bg2)"/><rect x="909.6" y="574.3" width="8.7" height="87.2" fill="#1a1a1a" opacity="0.6"/><rect x="909.6" y="574.3" width="7.9" height="87.2" fill="url(#bg3)"/><rect x="918.3" y="573.0" width="8.7" height="88.5" fill="#1a1a1a" opacity="0.6"/><rect x="918.3" y="573.0" width="7.9" height="88.5" fill="url(#bg4)"/><rect x="933.9" y="599.4" width="8.7" height="62.1" fill="#1a1a1a" opacity="0.6"/><rect x="933.9" y="599.4" width="7.9" height="62.1" fill="url(#bg0)"/><rect x="942.6" y="598.7" width="8.7" height="62.8" fill="#1a1a1a" opacity="0.6"/><rect x="942.6" y="598.7" width="7.9" height="62.8" fill="url(#bg1)"/><rect x="951.3" y="597.8" width="8.7" height="63.7" fill="#1a1a1a" opacity="0.6"/><rect x="951.3" y="597.8" width="7.9" height="63.7" fill="url(#bg2)"/><rect x="960.0" y="596.8" width="8.7" height="64.7" fill="#1a1a1a" opacity="0.6"/><rect x="960.0" y="596.8" width="7.9" height="64.7" fill="url(#bg3)"/><rect x="968.7" y="595.9" width="8.7" height="65.6" fill="#1a1a1a" opacity="0.6"/><rect x="968.7" y="595.9" width="7.9" height="65.6" fill="url(#bg4)"/><rect x="984.3" y="596.0" width="8.7" height="65.5" fill="#1a1a1a" opacity="0.6"/><rect x="984.3" y="596.0" width="7.9" height="65.5" fill="url(#bg0)"/><rect x="993.0" y="595.5" width="8.7" height="66.0" fill="#1a1a1a" opacity="0.6"/><rect x="993.0" y="595.5" width="7.9" height="66.0" fill="url(#bg1)"/><rect x="1001.7" y="594.7" width="8.7" height="66.8" fill="#1a1a1a" opacity="0.6"/><rect x="1001.7" y="594.7" width="7.9" height="66.8" fill="url(#bg2)"/><rect x="1010.4" y="594.0" width="8.7" height="67.5" fill="#1a1a1a" opacity="0.6"/><rect x="1010.4" y="594.0" width="7.9" height="67.5" fill="url(#bg3)"/><rect x="1019.1" y="593.2" width="8.7" height="68.3" fill="#1a1a1a" opacity="0.6"/><rect x="1019.1" y="593.2" width="7.9" height="68.3" fill="url(#bg4)"/><g stroke="#ababab" stroke-width="1" fill="none" shape-rendering="crispEdges"><path d="M526.5 661.5 H1030.5"/><path d="M485.5 679.5 H1030.5"/><path d="M485.5 698.5 H1030.5"/><path d="M485.5 717.5 H1030.5"/><path d="M485.5 737.5 H1030.5"/><path d="M485.5 756.5 H1030.5"/><path d="M485.5 775.5 H1030.5"/><path d="M485.5 679.5 V775.5"/><path d="M526.5 661.5 V775.5"/><path d="M577.5 661.5 V775.5"/><path d="M627.5 661.5 V775.5"/><path d="M677.5 661.5 V775.5"/><path d="M728.5 661.5 V775.5"/><path d="M778.5 661.5 V775.5"/><path d="M828.5 661.5 V775.5"/><path d="M879.5 661.5 V775.5"/><path d="M929.5 661.5 V775.5"/><path d="M979.5 661.5 V775.5"/><path d="M1030.5 661.5 V775.5"/></g><rect x="490" y="685.8" width="6" height="6" fill="#5b85da"/><rect x="490" y="705.0" width="6" height="6" fill="#f59048"/><rect x="490" y="724.2" width="6" height="6" fill="#bdbdbd"/><rect x="490" y="743.4" width="6" height="6" fill="#ffcf3a"/><rect x="490" y="762.6" width="6" height="6" fill="#6fb0ec"/><circle cx="432.5" cy="362.5" r="4.6" fill="#fff" stroke="#979797" stroke-width="1.8"/><circle cx="432.5" cy="572.0" r="4.6" fill="#fff" stroke="#979797" stroke-width="1.8"/><circle cx="432.5" cy="781.5" r="4.6" fill="#fff" stroke="#979797" stroke-width="1.8"/><circle cx="738.5" cy="362.5" r="4.6" fill="#fff" stroke="#979797" stroke-width="1.8"/><circle cx="738.5" cy="781.5" r="4.6" fill="#fff" stroke="#979797" stroke-width="1.8"/><circle cx="1044.5" cy="362.5" r="4.6" fill="#fff" stroke="#979797" stroke-width="1.8"/><circle cx="1044.5" cy="572.0" r="4.6" fill="#fff" stroke="#979797" stroke-width="1.8"/><circle cx="1044.5" cy="781.5" r="4.6" fill="#fff" stroke="#979797" stroke-width="1.8"/></svg>
<div class="a" style="right:566.5px;top:654.0px;line-height:14px;font-size:12px;letter-spacing:-0.3px;color:#d9d9d9;white-space:nowrap">0</div>
<div class="a" style="right:566.5px;top:614.2px;line-height:14px;font-size:12px;letter-spacing:-0.3px;color:#d9d9d9;white-space:nowrap">1000000</div>
<div class="a" style="right:566.5px;top:574.5px;line-height:14px;font-size:12px;letter-spacing:-0.3px;color:#d9d9d9;white-space:nowrap">2000000</div>
<div class="a" style="right:566.5px;top:534.8px;line-height:14px;font-size:12px;letter-spacing:-0.3px;color:#d9d9d9;white-space:nowrap">3000000</div>
<div class="a" style="right:566.5px;top:495.0px;line-height:14px;font-size:12px;letter-spacing:-0.3px;color:#d9d9d9;white-space:nowrap">4000000</div>
<div class="a" style="right:566.5px;top:455.2px;line-height:14px;font-size:12px;letter-spacing:-0.3px;color:#d9d9d9;white-space:nowrap">5000000</div>
<div class="a" style="right:566.5px;top:415.5px;line-height:14px;font-size:12px;letter-spacing:-0.3px;color:#d9d9d9;white-space:nowrap">6000000</div>
<div class="a" style="left:526.6px;top:663px;width:50.4px;line-height:15px;font-size:12px;color:#d9d9d9;text-align:center">1</div>
<div class="a" style="left:577.0px;top:663px;width:50.4px;line-height:15px;font-size:12px;color:#d9d9d9;text-align:center">2</div>
<div class="a" style="left:627.4px;top:663px;width:50.4px;line-height:15px;font-size:12px;color:#d9d9d9;text-align:center">3</div>
<div class="a" style="left:677.8px;top:663px;width:50.4px;line-height:15px;font-size:12px;color:#d9d9d9;text-align:center">4</div>
<div class="a" style="left:728.2px;top:663px;width:50.4px;line-height:15px;font-size:12px;color:#d9d9d9;text-align:center">5</div>
<div class="a" style="left:778.5px;top:663px;width:50.4px;line-height:15px;font-size:12px;color:#d9d9d9;text-align:center">6</div>
<div class="a" style="left:828.9px;top:663px;width:50.4px;line-height:15px;font-size:12px;color:#d9d9d9;text-align:center">7</div>
<div class="a" style="left:879.3px;top:663px;width:50.4px;line-height:15px;font-size:12px;color:#d9d9d9;text-align:center">8</div>
<div class="a" style="left:929.7px;top:663px;width:50.4px;line-height:15px;font-size:12px;color:#d9d9d9;text-align:center">9</div>
<div class="a" style="left:980.1px;top:663px;width:50.4px;line-height:15px;font-size:12px;color:#d9d9d9;text-align:center">10</div>
<div class="a" style="left:498px;top:681.7px;line-height:15px;font-size:12px;letter-spacing:-0.3px;color:#d9d9d9">1968</div>
<div class="a" style="left:526.6px;top:681.7px;width:50.4px;line-height:15px;font-size:12px;letter-spacing:-0.3px;color:#d9d9d9;text-align:center">5378599</div>
<div class="a" style="left:577.0px;top:681.7px;width:50.4px;line-height:15px;font-size:12px;letter-spacing:-0.3px;color:#d9d9d9;text-align:center">1500760</div>
<div class="a" style="left:627.4px;top:681.7px;width:50.4px;line-height:15px;font-size:12px;letter-spacing:-0.3px;color:#d9d9d9;text-align:center">1446832</div>
<div class="a" style="left:677.8px;top:681.7px;width:50.4px;line-height:15px;font-size:12px;letter-spacing:-0.3px;color:#d9d9d9;text-align:center">1819233</div>
<div class="a" style="left:728.2px;top:681.7px;width:50.4px;line-height:15px;font-size:12px;letter-spacing:-0.3px;color:#d9d9d9;text-align:center">1300012</div>
<div class="a" style="left:778.5px;top:681.7px;width:50.4px;line-height:15px;font-size:12px;letter-spacing:-0.3px;color:#d9d9d9;text-align:center">1252166</div>
<div class="a" style="left:828.9px;top:681.7px;width:50.4px;line-height:15px;font-size:12px;letter-spacing:-0.3px;color:#d9d9d9;text-align:center">1986605</div>
<div class="a" style="left:879.3px;top:681.7px;width:50.4px;line-height:15px;font-size:12px;letter-spacing:-0.3px;color:#d9d9d9;text-align:center">2103581</div>
<div class="a" style="left:929.7px;top:681.7px;width:50.4px;line-height:15px;font-size:12px;letter-spacing:-0.3px;color:#d9d9d9;text-align:center">1561647</div>
<div class="a" style="left:980.1px;top:681.7px;width:50.4px;line-height:15px;font-size:12px;letter-spacing:-0.3px;color:#d9d9d9;text-align:center">1648867</div>
<div class="a" style="left:498px;top:700.9px;line-height:15px;font-size:12px;letter-spacing:-0.3px;color:#d9d9d9">1969</div>
<div class="a" style="left:526.6px;top:700.9px;width:50.4px;line-height:15px;font-size:12px;letter-spacing:-0.3px;color:#d9d9d9;text-align:center">5329609</div>
<div class="a" style="left:577.0px;top:700.9px;width:50.4px;line-height:15px;font-size:12px;letter-spacing:-0.3px;color:#d9d9d9;text-align:center">1494872</div>
<div class="a" style="left:627.4px;top:700.9px;width:50.4px;line-height:15px;font-size:12px;letter-spacing:-0.3px;color:#d9d9d9;text-align:center">1428346</div>
<div class="a" style="left:677.8px;top:700.9px;width:50.4px;line-height:15px;font-size:12px;letter-spacing:-0.3px;color:#d9d9d9;text-align:center">1819946</div>
<div class="a" style="left:728.2px;top:700.9px;width:50.4px;line-height:15px;font-size:12px;letter-spacing:-0.3px;color:#d9d9d9;text-align:center">1284448</div>
<div class="a" style="left:778.5px;top:700.9px;width:50.4px;line-height:15px;font-size:12px;letter-spacing:-0.3px;color:#d9d9d9;text-align:center">1243807</div>
<div class="a" style="left:828.9px;top:700.9px;width:50.4px;line-height:15px;font-size:12px;letter-spacing:-0.3px;color:#d9d9d9;text-align:center">1982392</div>
<div class="a" style="left:879.3px;top:700.9px;width:50.4px;line-height:15px;font-size:12px;letter-spacing:-0.3px;color:#d9d9d9;text-align:center">2116575</div>
<div class="a" style="left:929.7px;top:700.9px;width:50.4px;line-height:15px;font-size:12px;letter-spacing:-0.3px;color:#d9d9d9;text-align:center">1580122</div>
<div class="a" style="left:980.1px;top:700.9px;width:50.4px;line-height:15px;font-size:12px;letter-spacing:-0.3px;color:#d9d9d9;text-align:center">1661573</div>
<div class="a" style="left:498px;top:720.1px;line-height:15px;font-size:12px;letter-spacing:-0.3px;color:#d9d9d9">1970</div>
<div class="a" style="left:526.6px;top:720.1px;width:50.4px;line-height:15px;font-size:12px;letter-spacing:-0.3px;color:#d9d9d9;text-align:center">5238676</div>
<div class="a" style="left:577.0px;top:720.1px;width:50.4px;line-height:15px;font-size:12px;letter-spacing:-0.3px;color:#d9d9d9;text-align:center">1483935</div>
<div class="a" style="left:627.4px;top:720.1px;width:50.4px;line-height:15px;font-size:12px;letter-spacing:-0.3px;color:#d9d9d9;text-align:center">1415081</div>
<div class="a" style="left:677.8px;top:720.1px;width:50.4px;line-height:15px;font-size:12px;letter-spacing:-0.3px;color:#d9d9d9;text-align:center">1820423</div>
<div class="a" style="left:728.2px;top:720.1px;width:50.4px;line-height:15px;font-size:12px;letter-spacing:-0.3px;color:#d9d9d9;text-align:center">1271203</div>
<div class="a" style="left:778.5px;top:720.1px;width:50.4px;line-height:15px;font-size:12px;letter-spacing:-0.3px;color:#d9d9d9;text-align:center">1235136</div>
<div class="a" style="left:828.9px;top:720.1px;width:50.4px;line-height:15px;font-size:12px;letter-spacing:-0.3px;color:#d9d9d9;text-align:center">1972367</div>
<div class="a" style="left:879.3px;top:720.1px;width:50.4px;line-height:15px;font-size:12px;letter-spacing:-0.3px;color:#d9d9d9;text-align:center">2146812</div>
<div class="a" style="left:929.7px;top:720.1px;width:50.4px;line-height:15px;font-size:12px;letter-spacing:-0.3px;color:#d9d9d9;text-align:center">1602000</div>
<div class="a" style="left:980.1px;top:720.1px;width:50.4px;line-height:15px;font-size:12px;letter-spacing:-0.3px;color:#d9d9d9;text-align:center">1680632</div>
<div class="a" style="left:498px;top:739.3px;line-height:15px;font-size:12px;letter-spacing:-0.3px;color:#d9d9d9">1971</div>
<div class="a" style="left:526.6px;top:739.3px;width:50.4px;line-height:15px;font-size:12px;letter-spacing:-0.3px;color:#d9d9d9;text-align:center">5229096</div>
<div class="a" style="left:577.0px;top:739.3px;width:50.4px;line-height:15px;font-size:12px;letter-spacing:-0.3px;color:#d9d9d9;text-align:center">1482267</div>
<div class="a" style="left:627.4px;top:739.3px;width:50.4px;line-height:15px;font-size:12px;letter-spacing:-0.3px;color:#d9d9d9;text-align:center">1403850</div>
<div class="a" style="left:677.8px;top:739.3px;width:50.4px;line-height:15px;font-size:12px;letter-spacing:-0.3px;color:#d9d9d9;text-align:center">1830057</div>
<div class="a" style="left:728.2px;top:739.3px;width:50.4px;line-height:15px;font-size:12px;letter-spacing:-0.3px;color:#d9d9d9;text-align:center">1263144</div>
<div class="a" style="left:778.5px;top:739.3px;width:50.4px;line-height:15px;font-size:12px;letter-spacing:-0.3px;color:#d9d9d9;text-align:center">1228720</div>
<div class="a" style="left:828.9px;top:739.3px;width:50.4px;line-height:15px;font-size:12px;letter-spacing:-0.3px;color:#d9d9d9;text-align:center">1960495</div>
<div class="a" style="left:879.3px;top:739.3px;width:50.4px;line-height:15px;font-size:12px;letter-spacing:-0.3px;color:#d9d9d9;text-align:center">2194478</div>
<div class="a" style="left:929.7px;top:739.3px;width:50.4px;line-height:15px;font-size:12px;letter-spacing:-0.3px;color:#d9d9d9;text-align:center">1626741</div>
<div class="a" style="left:980.1px;top:739.3px;width:50.4px;line-height:15px;font-size:12px;letter-spacing:-0.3px;color:#d9d9d9;text-align:center">1698426</div>
<div class="a" style="left:498px;top:758.5px;line-height:15px;font-size:12px;letter-spacing:-0.3px;color:#d9d9d9">1972</div>
<div class="a" style="left:526.6px;top:758.5px;width:50.4px;line-height:15px;font-size:12px;letter-spacing:-0.3px;color:#d9d9d9;text-align:center">5253074</div>
<div class="a" style="left:577.0px;top:758.5px;width:50.4px;line-height:15px;font-size:12px;letter-spacing:-0.3px;color:#d9d9d9;text-align:center">1486368</div>
<div class="a" style="left:627.4px;top:758.5px;width:50.4px;line-height:15px;font-size:12px;letter-spacing:-0.3px;color:#d9d9d9;text-align:center">1398305</div>
<div class="a" style="left:677.8px;top:758.5px;width:50.4px;line-height:15px;font-size:12px;letter-spacing:-0.3px;color:#d9d9d9;text-align:center">1849466</div>
<div class="a" style="left:728.2px;top:758.5px;width:50.4px;line-height:15px;font-size:12px;letter-spacing:-0.3px;color:#d9d9d9;text-align:center">1255699</div>
<div class="a" style="left:778.5px;top:758.5px;width:50.4px;line-height:15px;font-size:12px;letter-spacing:-0.3px;color:#d9d9d9;text-align:center">1226918</div>
<div class="a" style="left:828.9px;top:758.5px;width:50.4px;line-height:15px;font-size:12px;letter-spacing:-0.3px;color:#d9d9d9;text-align:center">1959404</div>
<div class="a" style="left:879.3px;top:758.5px;width:50.4px;line-height:15px;font-size:12px;letter-spacing:-0.3px;color:#d9d9d9;text-align:center">2226514</div>
<div class="a" style="left:929.7px;top:758.5px;width:50.4px;line-height:15px;font-size:12px;letter-spacing:-0.3px;color:#d9d9d9;text-align:center">1649069</div>
<div class="a" style="left:980.1px;top:758.5px;width:50.4px;line-height:15px;font-size:12px;letter-spacing:-0.3px;color:#d9d9d9;text-align:center">1718499</div>
<span class="fit a" id="f27" style="left:657.135px;top:378.8px;font-size:19.5px;line-height:19.5px;color:#f4f4f4;font-weight:bold;white-space:nowrap;transform-origin:0 50%;transform:scaleX(1.0062);text-shadow:1.5px 1.5px 1.5px #000;letter-spacing:2px;">グラフ タイトル</span>
<div class="a" style="left:459px;top:542.5px;width:0;height:0"><span class="a" style="left:-30px;top:-8px;width:60px;text-align:center;line-height:16px;font-size:12px;font-weight:bold;color:#d9d9d9;transform:rotate(-90deg);white-space:nowrap">軸ラベル</span></div>
<div class="a" style="left:1058px;top:360px;width:40px;height:27px;background:#fff;border:1px solid #c3c3c3"></div>
<div class="a" style="left:1058px;top:398px;width:40px;height:27px;background:#fff;border:1px solid #c3c3c3"></div>
<div class="a" style="left:1058px;top:437px;width:40px;height:26px;background:#fff;border:1px solid #c3c3c3"></div>
<svg class="a" style="left:1058px;top:360px" width="25" height="104" viewBox="0 0 25 104"><path d="M2.7 13.5 H25 M13.5 2.9 V23.6" stroke="#3a8a50" stroke-width="1.1"/><path d="M24.3 40.6 L26.3 42.6 L14.2 55.6 L12 53.6 Z" fill="#fff" stroke="#444" stroke-width="0.9"/><path d="M12 53.6 L14.2 55.6 C13.5 59.5 9 61.8 2.7 60.6 C5.5 59.2 6.8 57.5 7.8 55.8 C9 54 10.5 53.3 12 53.6 Z" fill="#5aa0e0" stroke="#2a6cb0" stroke-width="0.8"/><path d="M3.4 79.6 H24.1 V82.9 L15.6 90 V100.7 H11.3 V90 L3.4 82.9 Z" fill="#fff" stroke="#444" stroke-width="1.1"/></svg>
<svg class="a" style="left:0;top:0" width="1083" height="806" viewBox="0 0 1083 806"><g fill="none" stroke="#e2101a" stroke-width="2.4" stroke-linecap="round" stroke-linejoin="round"><path d="M45.0 149.0 C47.7 148.3 56.3 147.3 61.0 145.0 C65.7 142.7 69.8 140.0 73.0 135.0 C76.2 130.0 78.3 122.2 80.0 115.0 C81.7 107.8 82.3 98.3 83.0 92.0 C83.7 85.7 84.5 81.6 84.4 77.4 C84.3 73.2 83.9 69.6 82.3 66.6 C80.7 63.5 78.8 60.9 74.8 59.1 C70.8 57.3 65.1 55.8 58.2 55.8 C51.3 55.8 40.1 57.7 33.2 59.1 C26.3 60.5 21.2 61.7 16.6 64.1 C12.0 66.5 8.4 70.1 5.8 73.3 C3.2 76.5 2.0 79.3 1.2 83.2 C0.4 87.1 0.7 92.1 1.0 96.6 C1.3 101.1 1.6 104.3 3.0 110.0 C4.5 115.7 6.2 124.8 9.7 130.6 C13.2 136.4 19.4 140.6 24.2 145.0 C29.0 149.4 36.3 155.2 38.7 157.3"/><path d="M686.0 53.5 C685.8 53.8 687.0 54.6 685.0 55.5 C683.0 56.4 678.3 58.1 674.0 59.0 C669.7 59.9 664.5 61.1 659.0 60.6 C653.5 60.1 646.3 58.8 641.0 56.0 C635.7 53.2 630.3 48.8 627.0 44.0 C623.7 39.2 621.3 31.8 621.0 27.0 C620.7 22.2 621.7 18.5 625.0 15.0 C628.3 11.5 634.2 8.2 641.0 6.0 C647.8 3.8 656.8 2.8 666.0 2.0 C675.2 1.2 686.0 0.8 696.0 1.2 C706.0 1.6 719.2 2.6 726.0 4.4 C732.8 6.2 734.8 7.8 737.0 12.0 C739.2 16.2 739.5 23.3 739.0 29.5 C738.5 35.7 736.2 44.6 734.0 49.0 C731.8 53.4 729.7 54.5 726.0 56.0 C722.3 57.5 716.5 57.3 712.0 58.0 C707.5 58.7 701.2 59.7 699.0 60.0"/><path d="M817.0 148.5 C814.2 148.4 805.3 148.2 800.0 148.0 C794.7 147.8 790.5 148.2 785.0 147.5 C779.5 146.8 771.8 146.3 767.0 143.6 C762.2 140.8 759.4 136.6 756.0 131.0 C752.6 125.4 748.5 116.9 746.5 110.0 C744.5 103.1 743.3 96.0 744.0 89.5 C744.7 83.0 746.7 75.9 750.5 71.0 C754.3 66.1 760.5 63.6 767.0 60.0 C773.5 56.4 781.7 51.8 789.5 49.5 C797.3 47.2 806.3 46.1 813.7 46.4 C821.1 46.7 827.8 48.2 834.0 51.4 C840.2 54.5 846.5 59.5 851.0 65.3 C855.5 71.1 859.5 79.5 861.0 86.0 C862.5 92.5 861.7 98.2 860.0 104.4 C858.3 110.6 854.7 117.7 851.0 123.0 C847.3 128.3 844.5 132.0 838.0 136.0 C831.5 140.0 820.3 144.2 812.0 147.0 C803.7 149.8 792.0 152.0 788.0 153.0"/><path d="M806.6 166.2 C809.5 172.5 819.4 193.4 824.0 204.0 C828.6 214.6 831.3 221.0 834.0 230.0 C836.7 239.0 838.6 249.7 840.0 258.0 C841.4 266.3 842.3 273.2 842.4 280.0 C842.5 286.8 841.6 294.1 840.6 298.6 C839.6 303.1 838.5 304.0 836.5 306.8 C834.5 309.6 831.4 313.1 828.3 315.7 C825.2 318.3 821.1 320.8 817.9 322.4 C814.7 324.0 810.7 324.9 809.3 325.4"/><path d="M817.1 326.5 L822.3 306.0 L827.6 298.6 L847.7 316.5 L846.2 318.7 L829.8 322.8 L817.1 323.0"/></g></svg>
</body></html>
